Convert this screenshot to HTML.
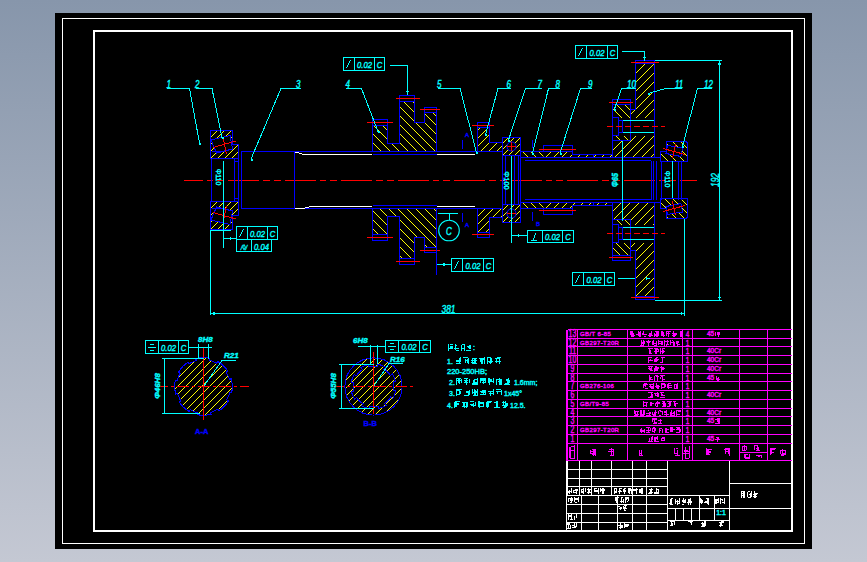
<!DOCTYPE html>
<html><head><meta charset="utf-8"><style>
html,body{margin:0;padding:0;width:867px;height:562px;overflow:hidden;}
body{background:linear-gradient(to bottom,#8796ab 0%,#c4c8d3 100%);}
svg{position:absolute;left:0;top:0;}
text{font-family:"Liberation Sans",sans-serif;}
</style></head><body>
<svg width="867" height="562" viewBox="0 0 867 562" shape-rendering="crispEdges">
<rect x="55" y="13" width="757" height="536" fill="#000"/>
<rect x="62.5" y="18.5" width="742" height="525" fill="none" stroke="#ffffff" stroke-width="1"/>
<rect x="94" y="31" width="698" height="500" fill="none" stroke="#ffffff" stroke-width="2"/>
<path d="M183.5,180.5H697" stroke="#ff0000" stroke-width="1" stroke-dasharray="31,4,6.5,4,7,4" stroke-dashoffset="11.6"/>
<clipPath id="cp1"><polygon points="210.5,130.5 232,130.5 232,144.5 238.5,144.5 238.5,158.5 210.5,158.5"/></clipPath>
<path clip-path="url(#cp1)" d="M210.5,130.5L182.5,158.5M217.5,130.5L189.5,158.5M224.5,130.5L196.5,158.5M231.5,130.5L203.5,158.5M238.5,130.5L210.5,158.5M245.5,130.5L217.5,158.5M252.5,130.5L224.5,158.5M259.5,130.5L231.5,158.5" stroke="#ffff00" stroke-width="1" fill="none"/>
<polygon points="211,140 230,135.5 232.5,149 216.5,153" stroke="#000" stroke-width="0" fill="#000"/>
<polygon points="210.5,130.5 232,130.5 232,144.5 238.5,144.5 238.5,158.5 210.5,158.5" stroke="#0000ff" stroke-width="1" fill="none"/>
<polygon points="211,140 230,135.5 232.5,149 216.5,153" stroke="#0000ff" stroke-width="1" fill="none"/>
<line x1="212" y1="151.5" x2="226" y2="151.5" stroke="#0000ff" stroke-width="1"/>
<line x1="213" y1="147.5" x2="236" y2="141" stroke="#ff0000" stroke-width="1"/>
<line x1="223.5" y1="139" x2="226.5" y2="154" stroke="#ff0000" stroke-width="1"/>
<clipPath id="cp2"><polygon points="210.5,229.5 232,229.5 232,215.5 238.5,215.5 238.5,201.5 210.5,201.5"/></clipPath>
<path clip-path="url(#cp2)" d="M210.5,201.5L182.5,229.5M217.5,201.5L189.5,229.5M224.5,201.5L196.5,229.5M231.5,201.5L203.5,229.5M238.5,201.5L210.5,229.5M245.5,201.5L217.5,229.5M252.5,201.5L224.5,229.5M259.5,201.5L231.5,229.5" stroke="#ffff00" stroke-width="1" fill="none"/>
<polygon points="211,220 230,224.5 232.5,211 216.5,207" stroke="#000" stroke-width="0" fill="#000"/>
<polygon points="210.5,229.5 232,229.5 232,215.5 238.5,215.5 238.5,201.5 210.5,201.5" stroke="#0000ff" stroke-width="1" fill="none"/>
<polygon points="211,220 230,224.5 232.5,211 216.5,207" stroke="#0000ff" stroke-width="1" fill="none"/>
<line x1="212" y1="208.5" x2="226" y2="208.5" stroke="#0000ff" stroke-width="1"/>
<line x1="213" y1="212.5" x2="236" y2="219" stroke="#ff0000" stroke-width="1"/>
<line x1="223.5" y1="221" x2="226.5" y2="206" stroke="#ff0000" stroke-width="1"/>
<line x1="211.5" y1="158.5" x2="211.5" y2="201.5" stroke="#0000ff" stroke-width="1"/>
<line x1="234.5" y1="158.5" x2="234.5" y2="201.5" stroke="#0000ff" stroke-width="1"/>
<line x1="238.5" y1="158.5" x2="238.5" y2="201.5" stroke="#0000ff" stroke-width="1"/>
<line x1="234.5" y1="161.5" x2="238.5" y2="161.5" stroke="#0000ff" stroke-width="1"/>
<line x1="234.5" y1="198.5" x2="238.5" y2="198.5" stroke="#0000ff" stroke-width="1"/>
<rect x="241.5" y="151.5" width="53.0" height="57.0" stroke="#0000ff" stroke-width="1" fill="none"/>
<line x1="294.5" y1="151.5" x2="502.5" y2="151.5" stroke="#0000ff" stroke-width="1"/>
<line x1="294.5" y1="208.5" x2="502.5" y2="208.5" stroke="#0000ff" stroke-width="1"/>
<polyline points="295,152 299,153 303,154.5 372,154.5" stroke="#ffffff" stroke-width="1" fill="none"/>
<polyline points="295,208.5 301,209 311,206.5 372,206.5" stroke="#ffffff" stroke-width="1" fill="none"/>
<line x1="437" y1="154.5" x2="475" y2="154.5" stroke="#ffffff" stroke-width="1"/>
<line x1="437" y1="206.5" x2="475" y2="206.5" stroke="#ffffff" stroke-width="1"/>
<clipPath id="cp3"><polygon points="372.5,119.5 387.5,119.5 387.5,143.5 399.5,143.5 399.5,95.5 414.5,95.5 414.5,122.5 424.5,122.5 424.5,107.5 436.5,107.5 436.5,151.5 372.5,151.5"/></clipPath>
<path clip-path="url(#cp3)" d="M316.5,95.5L372.5,151.5M325.5,95.5L381.5,151.5M334.5,95.5L390.5,151.5M343.5,95.5L399.5,151.5M352.5,95.5L408.5,151.5M361.5,95.5L417.5,151.5M370.5,95.5L426.5,151.5M379.5,95.5L435.5,151.5M388.5,95.5L444.5,151.5M397.5,95.5L453.5,151.5M406.5,95.5L462.5,151.5M415.5,95.5L471.5,151.5M424.5,95.5L480.5,151.5M433.5,95.5L489.5,151.5" stroke="#ffff00" stroke-width="1" fill="none"/>
<rect x="372.5" y="119.5" width="15.0" height="6.0" fill="#000"/>
<rect x="399.5" y="95.5" width="15.0" height="6.0" fill="#000"/>
<rect x="424.5" y="107.5" width="12.0" height="5.0" fill="#000"/>
<polygon points="372.5,119.5 387.5,119.5 387.5,143.5 399.5,143.5 399.5,95.5 414.5,95.5 414.5,122.5 424.5,122.5 424.5,107.5 436.5,107.5 436.5,151.5 372.5,151.5" stroke="#0000ff" stroke-width="1" fill="none"/>
<line x1="372.5" y1="125.5" x2="387.5" y2="125.5" stroke="#0000ff" stroke-width="1"/>
<line x1="399.5" y1="101.5" x2="414.5" y2="101.5" stroke="#0000ff" stroke-width="1"/>
<line x1="424.5" y1="112.5" x2="436.5" y2="112.5" stroke="#0000ff" stroke-width="1"/>
<line x1="367" y1="122.5" x2="392.5" y2="122.5" stroke="#ff0000" stroke-width="1"/>
<line x1="396" y1="98.5" x2="420" y2="98.5" stroke="#ff0000" stroke-width="1"/>
<line x1="420" y1="109.5" x2="440" y2="109.5" stroke="#ff0000" stroke-width="1"/>
<clipPath id="cp4"><polygon points="372.5,240.5 387.5,240.5 387.5,216.5 399.5,216.5 399.5,264.5 414.5,264.5 414.5,237.5 424.5,237.5 424.5,252.5 436.5,252.5 436.5,208.5 372.5,208.5"/></clipPath>
<path clip-path="url(#cp4)" d="M316.5,208.5L372.5,264.5M325.5,208.5L381.5,264.5M334.5,208.5L390.5,264.5M343.5,208.5L399.5,264.5M352.5,208.5L408.5,264.5M361.5,208.5L417.5,264.5M370.5,208.5L426.5,264.5M379.5,208.5L435.5,264.5M388.5,208.5L444.5,264.5M397.5,208.5L453.5,264.5M406.5,208.5L462.5,264.5M415.5,208.5L471.5,264.5M424.5,208.5L480.5,264.5M433.5,208.5L489.5,264.5" stroke="#ffff00" stroke-width="1" fill="none"/>
<rect x="372.5" y="234.5" width="15.0" height="6.0" fill="#000"/>
<rect x="399.5" y="258.5" width="15.0" height="6.0" fill="#000"/>
<rect x="424.5" y="247.5" width="12.0" height="5.0" fill="#000"/>
<polygon points="372.5,240.5 387.5,240.5 387.5,216.5 399.5,216.5 399.5,264.5 414.5,264.5 414.5,237.5 424.5,237.5 424.5,252.5 436.5,252.5 436.5,208.5 372.5,208.5" stroke="#0000ff" stroke-width="1" fill="none"/>
<line x1="372.5" y1="234.5" x2="387.5" y2="234.5" stroke="#0000ff" stroke-width="1"/>
<line x1="399.5" y1="258.5" x2="414.5" y2="258.5" stroke="#0000ff" stroke-width="1"/>
<line x1="424.5" y1="247.5" x2="436.5" y2="247.5" stroke="#0000ff" stroke-width="1"/>
<line x1="367" y1="237.5" x2="392.5" y2="237.5" stroke="#ff0000" stroke-width="1"/>
<line x1="396" y1="261.5" x2="420" y2="261.5" stroke="#ff0000" stroke-width="1"/>
<line x1="420" y1="250.5" x2="440" y2="250.5" stroke="#ff0000" stroke-width="1"/>
<line x1="372.5" y1="154.5" x2="436.5" y2="154.5" stroke="#0000ff" stroke-width="1"/>
<line x1="372.5" y1="205.5" x2="436.5" y2="205.5" stroke="#0000ff" stroke-width="1"/>
<line x1="436.5" y1="208" x2="436.5" y2="275" stroke="#0000ff" stroke-width="1"/>
<circle cx="449" cy="230.5" r="10.3" fill="none" stroke="#00ffff" stroke-width="1.1" shape-rendering="geometricPrecision"/>
<line x1="449" y1="213" x2="449" y2="220" stroke="#00ffff" stroke-width="1"/>
<line x1="438" y1="213.5" x2="458" y2="213.5" stroke="#00ffff" stroke-width="1"/>
<text transform="translate(449 234.5) rotate(0) scale(0.8 1)" fill="#00ffff" font-size="10" text-anchor="middle" style="font-style:italic;font-weight:normal" stroke="#00ffff" stroke-width="0.4">C</text>
<line x1="462.5" y1="213" x2="462.5" y2="222" stroke="#0000ff" stroke-width="1"/>
<line x1="462.5" y1="140" x2="462.5" y2="149" stroke="#0000ff" stroke-width="1"/>
<text x="465" y="227" fill="#0000ff" font-size="6" stroke="#0000ff" stroke-width="0.4">A</text>
<text x="465" y="137" fill="#0000ff" font-size="6" stroke="#0000ff" stroke-width="0.4">A</text>
<line x1="532.5" y1="213" x2="532.5" y2="221" stroke="#0000ff" stroke-width="1"/>
<text x="536" y="226" fill="#0000ff" font-size="6" stroke="#0000ff" stroke-width="0.4">B</text>
<clipPath id="cp5"><polygon points="477.5,122.5 489,122.5 489,142.5 502,142.5 502,151.5 477.5,151.5"/></clipPath>
<path clip-path="url(#cp5)" d="M477.5,122.5L448.5,151.5M485.5,122.5L456.5,151.5M493.5,122.5L464.5,151.5M501.5,122.5L472.5,151.5M509.5,122.5L480.5,151.5M517.5,122.5L488.5,151.5M525.5,122.5L496.5,151.5" stroke="#ffff00" stroke-width="1" fill="none"/>
<rect x="477.5" y="122.5" width="11.5" height="5.0" fill="#000"/>
<polygon points="477.5,122.5 489,122.5 489,142.5 502,142.5 502,151.5 477.5,151.5" stroke="#0000ff" stroke-width="1" fill="none"/>
<line x1="477.5" y1="127.5" x2="489" y2="127.5" stroke="#0000ff" stroke-width="1"/>
<line x1="472" y1="125.5" x2="494" y2="125.5" stroke="#ff0000" stroke-width="1"/>
<clipPath id="cp6"><polygon points="477.5,237.5 489,237.5 489,217.5 502,217.5 502,208.5 477.5,208.5"/></clipPath>
<path clip-path="url(#cp6)" d="M477.5,208.5L448.5,237.5M485.5,208.5L456.5,237.5M493.5,208.5L464.5,237.5M501.5,208.5L472.5,237.5M509.5,208.5L480.5,237.5M517.5,208.5L488.5,237.5M525.5,208.5L496.5,237.5" stroke="#ffff00" stroke-width="1" fill="none"/>
<rect x="477.5" y="232.5" width="11.5" height="5.0" fill="#000"/>
<polygon points="477.5,237.5 489,237.5 489,217.5 502,217.5 502,208.5 477.5,208.5" stroke="#0000ff" stroke-width="1" fill="none"/>
<line x1="477.5" y1="232.5" x2="489" y2="232.5" stroke="#0000ff" stroke-width="1"/>
<line x1="472" y1="234.5" x2="494" y2="234.5" stroke="#ff0000" stroke-width="1"/>
<clipPath id="cp7"><polygon points="502.5,137.5 520.5,137.5 520.5,155.5 502.5,155.5"/></clipPath>
<path clip-path="url(#cp7)" d="M502.5,137.5L484.5,155.5M508.5,137.5L490.5,155.5M514.5,137.5L496.5,155.5M520.5,137.5L502.5,155.5M526.5,137.5L508.5,155.5M532.5,137.5L514.5,155.5" stroke="#ffff00" stroke-width="1" fill="none"/>
<circle cx="511.5" cy="146.5" r="4.5" fill="#000" stroke="#0000ff" stroke-width="1.1" shape-rendering="geometricPrecision"/>
<polygon points="502.5,137.5 520.5,137.5 520.5,155.5 502.5,155.5" stroke="#0000ff" stroke-width="1" fill="none"/>
<line x1="507" y1="146.5" x2="516" y2="146.5" stroke="#ff0000" stroke-width="1"/>
<line x1="511.5" y1="142" x2="511.5" y2="151" stroke="#ff0000" stroke-width="1"/>
<clipPath id="cp8"><polygon points="502.5,222.5 520.5,222.5 520.5,204.5 502.5,204.5"/></clipPath>
<path clip-path="url(#cp8)" d="M502.5,204.5L484.5,222.5M508.5,204.5L490.5,222.5M514.5,204.5L496.5,222.5M520.5,204.5L502.5,222.5M526.5,204.5L508.5,222.5M532.5,204.5L514.5,222.5" stroke="#ffff00" stroke-width="1" fill="none"/>
<circle cx="511.5" cy="213.5" r="4.5" fill="#000" stroke="#0000ff" stroke-width="1.1" shape-rendering="geometricPrecision"/>
<polygon points="502.5,222.5 520.5,222.5 520.5,204.5 502.5,204.5" stroke="#0000ff" stroke-width="1" fill="none"/>
<line x1="507" y1="213.5" x2="516" y2="213.5" stroke="#ff0000" stroke-width="1"/>
<line x1="511.5" y1="218" x2="511.5" y2="209" stroke="#ff0000" stroke-width="1"/>
<line x1="502.5" y1="155.5" x2="502.5" y2="204.5" stroke="#0000ff" stroke-width="1"/>
<line x1="505.5" y1="155.5" x2="505.5" y2="204.5" stroke="#0000ff" stroke-width="1"/>
<line x1="514.5" y1="155.5" x2="514.5" y2="204.5" stroke="#0000ff" stroke-width="1"/>
<line x1="518.5" y1="155.5" x2="518.5" y2="204.5" stroke="#0000ff" stroke-width="1"/>
<line x1="520.5" y1="155.5" x2="520.5" y2="204.5" stroke="#0000ff" stroke-width="1"/>
<clipPath id="cp9"><polygon points="520.5,151.5 543.5,151.5 543.5,157.5 520.5,157.5"/></clipPath>
<path clip-path="url(#cp9)" d="M514.5,151.5L520.5,157.5M522.5,151.5L528.5,157.5M530.5,151.5L536.5,157.5M538.5,151.5L544.5,157.5" stroke="#ffff00" stroke-width="1" fill="none"/>
<clipPath id="cp10"><polygon points="543.5,151.5 572.5,151.5 572.5,154.5 612,154.5 612,157.5 543.5,157.5"/></clipPath>
<path clip-path="url(#cp10)" d="M543.5,151.5L537.5,157.5M551.5,151.5L545.5,157.5M559.5,151.5L553.5,157.5M567.5,151.5L561.5,157.5M575.5,151.5L569.5,157.5M583.5,151.5L577.5,157.5M591.5,151.5L585.5,157.5M599.5,151.5L593.5,157.5M607.5,151.5L601.5,157.5M615.5,151.5L609.5,157.5" stroke="#ffff00" stroke-width="1" fill="none"/>
<polygon points="520.5,151.5 572.5,151.5 572.5,154.5 612,154.5 612,157.5 520.5,157.5" stroke="#0000ff" stroke-width="1" fill="none"/>
<rect x="543.5" y="145.5" width="29.0" height="6.0" stroke="#0000ff" stroke-width="1" fill="none"/>
<line x1="539" y1="149.5" x2="576" y2="149.5" stroke="#ff0000" stroke-width="1"/>
<line x1="524.5" y1="160.5" x2="651" y2="160.5" stroke="#0000ff" stroke-width="1"/>
<line x1="532.5" y1="140" x2="532.5" y2="148" stroke="#0000ff" stroke-width="1"/>
<line x1="593.5" y1="154.5" x2="593.5" y2="157.5" stroke="#0000ff" stroke-width="1"/>
<clipPath id="cp11"><polygon points="520.5,208.5 543.5,208.5 543.5,202.5 520.5,202.5"/></clipPath>
<path clip-path="url(#cp11)" d="M514.5,202.5L520.5,208.5M522.5,202.5L528.5,208.5M530.5,202.5L536.5,208.5M538.5,202.5L544.5,208.5" stroke="#ffff00" stroke-width="1" fill="none"/>
<clipPath id="cp12"><polygon points="543.5,208.5 572.5,208.5 572.5,205.5 612,205.5 612,202.5 543.5,202.5"/></clipPath>
<path clip-path="url(#cp12)" d="M543.5,202.5L537.5,208.5M551.5,202.5L545.5,208.5M559.5,202.5L553.5,208.5M567.5,202.5L561.5,208.5M575.5,202.5L569.5,208.5M583.5,202.5L577.5,208.5M591.5,202.5L585.5,208.5M599.5,202.5L593.5,208.5M607.5,202.5L601.5,208.5M615.5,202.5L609.5,208.5" stroke="#ffff00" stroke-width="1" fill="none"/>
<polygon points="520.5,208.5 572.5,208.5 572.5,205.5 612,205.5 612,202.5 520.5,202.5" stroke="#0000ff" stroke-width="1" fill="none"/>
<rect x="543.5" y="208.5" width="29.0" height="6.0" stroke="#0000ff" stroke-width="1" fill="none"/>
<line x1="539" y1="210.5" x2="576" y2="210.5" stroke="#ff0000" stroke-width="1"/>
<line x1="524.5" y1="199.5" x2="651" y2="199.5" stroke="#0000ff" stroke-width="1"/>
<line x1="532.5" y1="220" x2="532.5" y2="212" stroke="#0000ff" stroke-width="1"/>
<line x1="593.5" y1="205.5" x2="593.5" y2="202.5" stroke="#0000ff" stroke-width="1"/>
<line x1="518.5" y1="157.5" x2="518.5" y2="202.5" stroke="#0000ff" stroke-width="1"/>
<clipPath id="cp13"><polygon points="635.5,60.5 654.5,60.5 654.5,157.5 612.5,157.5 612.5,140.5 630.5,140.5 630.5,109.5 635.5,109.5"/></clipPath>
<path clip-path="url(#cp13)" d="M612.5,60.5L515.5,157.5M621.5,60.5L524.5,157.5M630.5,60.5L533.5,157.5M639.5,60.5L542.5,157.5M648.5,60.5L551.5,157.5M657.5,60.5L560.5,157.5M666.5,60.5L569.5,157.5M675.5,60.5L578.5,157.5M684.5,60.5L587.5,157.5M693.5,60.5L596.5,157.5M702.5,60.5L605.5,157.5M711.5,60.5L614.5,157.5M720.5,60.5L623.5,157.5M729.5,60.5L632.5,157.5M738.5,60.5L641.5,157.5M747.5,60.5L650.5,157.5" stroke="#ffff00" stroke-width="1" fill="none"/>
<clipPath id="cp14"><polygon points="612.5,104.5 630.5,104.5 630.5,140.5 612.5,140.5"/></clipPath>
<path clip-path="url(#cp14)" d="M576.5,104.5L612.5,140.5M584.5,104.5L620.5,140.5M592.5,104.5L628.5,140.5M600.5,104.5L636.5,140.5M608.5,104.5L644.5,140.5M616.5,104.5L652.5,140.5M624.5,104.5L660.5,140.5" stroke="#ffff00" stroke-width="1" fill="none"/>
<rect x="635.5" y="60.5" width="19" height="3" fill="#000"/>
<polygon points="613,117.5 653.5,117.5 653.5,135.5 613,135.5" stroke="#000" stroke-width="0" fill="#000"/>
<polygon points="635.5,60.5 654.5,60.5 654.5,157.5 612.5,157.5 612.5,140.5 630.5,140.5 630.5,109.5 635.5,109.5" stroke="#0000ff" stroke-width="1" fill="none"/>
<rect x="612.5" y="99.5" width="18.0" height="41.0" stroke="#0000ff" stroke-width="1" fill="none"/>
<line x1="612.5" y1="104.5" x2="630.5" y2="104.5" stroke="#0000ff" stroke-width="1"/>
<line x1="635.5" y1="63.5" x2="654.5" y2="63.5" stroke="#0000ff" stroke-width="1"/>
<rect x="612.5" y="117.5" width="6.0" height="18.0" stroke="#0000ff" stroke-width="1" fill="none"/>
<rect x="618.5" y="120.5" width="4.0" height="12.0" stroke="#0000ff" stroke-width="1" fill="none"/>
<line x1="622.5" y1="120.5" x2="653.5" y2="120.5" stroke="#00ffff" stroke-width="1"/>
<line x1="622.5" y1="132.5" x2="653.5" y2="132.5" stroke="#00ffff" stroke-width="1"/>
<path d="M607,126.5H665" stroke="#ff0000" stroke-dasharray="6,3"/>
<line x1="609" y1="102.5" x2="633" y2="102.5" stroke="#ff0000" stroke-width="1"/>
<line x1="631" y1="62.5" x2="659" y2="62.5" stroke="#ff0000" stroke-width="1"/>
<clipPath id="cp15"><polygon points="635.5,299.5 654.5,299.5 654.5,202.5 612.5,202.5 612.5,219.5 630.5,219.5 630.5,250.5 635.5,250.5"/></clipPath>
<path clip-path="url(#cp15)" d="M612.5,202.5L515.5,299.5M621.5,202.5L524.5,299.5M630.5,202.5L533.5,299.5M639.5,202.5L542.5,299.5M648.5,202.5L551.5,299.5M657.5,202.5L560.5,299.5M666.5,202.5L569.5,299.5M675.5,202.5L578.5,299.5M684.5,202.5L587.5,299.5M693.5,202.5L596.5,299.5M702.5,202.5L605.5,299.5M711.5,202.5L614.5,299.5M720.5,202.5L623.5,299.5M729.5,202.5L632.5,299.5M738.5,202.5L641.5,299.5M747.5,202.5L650.5,299.5" stroke="#ffff00" stroke-width="1" fill="none"/>
<clipPath id="cp16"><polygon points="612.5,255.5 630.5,255.5 630.5,219.5 612.5,219.5"/></clipPath>
<path clip-path="url(#cp16)" d="M576.5,219.5L612.5,255.5M584.5,219.5L620.5,255.5M592.5,219.5L628.5,255.5M600.5,219.5L636.5,255.5M608.5,219.5L644.5,255.5M616.5,219.5L652.5,255.5M624.5,219.5L660.5,255.5" stroke="#ffff00" stroke-width="1" fill="none"/>
<rect x="635.5" y="296.5" width="19" height="3" fill="#000"/>
<polygon points="613,242.5 653.5,242.5 653.5,224.5 613,224.5" stroke="#000" stroke-width="0" fill="#000"/>
<polygon points="635.5,299.5 654.5,299.5 654.5,202.5 612.5,202.5 612.5,219.5 630.5,219.5 630.5,250.5 635.5,250.5" stroke="#0000ff" stroke-width="1" fill="none"/>
<rect x="612.5" y="219.5" width="18.0" height="41.0" stroke="#0000ff" stroke-width="1" fill="none"/>
<line x1="612.5" y1="255.5" x2="630.5" y2="255.5" stroke="#0000ff" stroke-width="1"/>
<line x1="635.5" y1="296.5" x2="654.5" y2="296.5" stroke="#0000ff" stroke-width="1"/>
<rect x="612.5" y="224.5" width="6.0" height="18.0" stroke="#0000ff" stroke-width="1" fill="none"/>
<rect x="618.5" y="227.5" width="4.0" height="12.0" stroke="#0000ff" stroke-width="1" fill="none"/>
<line x1="622.5" y1="239.5" x2="653.5" y2="239.5" stroke="#00ffff" stroke-width="1"/>
<line x1="622.5" y1="227.5" x2="653.5" y2="227.5" stroke="#00ffff" stroke-width="1"/>
<path d="M607,233.5H665" stroke="#ff0000" stroke-dasharray="6,3"/>
<line x1="609" y1="257.5" x2="633" y2="257.5" stroke="#ff0000" stroke-width="1"/>
<line x1="631" y1="297.5" x2="659" y2="297.5" stroke="#ff0000" stroke-width="1"/>
<clipPath id="cp17"><polygon points="666.5,141.5 686,141.5 687.5,143 687.5,161.5 660.5,161.5 660.5,151.5 666.5,151.5"/></clipPath>
<path clip-path="url(#cp17)" d="M640.5,141.5L660.5,161.5M648.5,141.5L668.5,161.5M656.5,141.5L676.5,161.5M664.5,141.5L684.5,161.5M672.5,141.5L692.5,161.5M680.5,141.5L700.5,161.5" stroke="#ffff00" stroke-width="1" fill="none"/>
<polygon points="667.5,145.5 682.5,148 681,156.5 666,153.5" stroke="#000" stroke-width="0" fill="#000"/>
<polygon points="666.5,141.5 686,141.5 687.5,143 687.5,161.5 660.5,161.5 660.5,151.5 666.5,151.5" stroke="#0000ff" stroke-width="1" fill="none"/>
<polygon points="667.5,145.5 682.5,148 681,156.5 666,153.5" stroke="#0000ff" stroke-width="1" fill="none"/>
<line x1="663" y1="148.5" x2="685" y2="154.5" stroke="#ff0000" stroke-width="1"/>
<line x1="675.5" y1="144.5" x2="672.5" y2="158.5" stroke="#ff0000" stroke-width="1"/>
<clipPath id="cp18"><polygon points="666.5,218.5 686,218.5 687.5,217 687.5,198.5 660.5,198.5 660.5,208.5 666.5,208.5"/></clipPath>
<path clip-path="url(#cp18)" d="M640.5,198.5L660.5,218.5M648.5,198.5L668.5,218.5M656.5,198.5L676.5,218.5M664.5,198.5L684.5,218.5M672.5,198.5L692.5,218.5M680.5,198.5L700.5,218.5" stroke="#ffff00" stroke-width="1" fill="none"/>
<polygon points="667.5,214.5 682.5,212 681,203.5 666,206.5" stroke="#000" stroke-width="0" fill="#000"/>
<polygon points="666.5,218.5 686,218.5 687.5,217 687.5,198.5 660.5,198.5 660.5,208.5 666.5,208.5" stroke="#0000ff" stroke-width="1" fill="none"/>
<polygon points="667.5,214.5 682.5,212 681,203.5 666,206.5" stroke="#0000ff" stroke-width="1" fill="none"/>
<line x1="663" y1="211.5" x2="685" y2="205.5" stroke="#ff0000" stroke-width="1"/>
<line x1="675.5" y1="215.5" x2="672.5" y2="201.5" stroke="#ff0000" stroke-width="1"/>
<line x1="651.5" y1="160.5" x2="651.5" y2="199.5" stroke="#0000ff" stroke-width="1"/>
<line x1="653.5" y1="160.5" x2="653.5" y2="199.5" stroke="#0000ff" stroke-width="1"/>
<line x1="656.5" y1="160.5" x2="656.5" y2="199.5" stroke="#0000ff" stroke-width="1"/>
<line x1="661" y1="160.5" x2="661" y2="199.5" stroke="#0000ff" stroke-width="1"/>
<line x1="678.5" y1="160.5" x2="678.5" y2="199.5" stroke="#0000ff" stroke-width="1"/>
<line x1="681.5" y1="160.5" x2="681.5" y2="199.5" stroke="#0000ff" stroke-width="1"/>
<line x1="654" y1="157.5" x2="661" y2="157.5" stroke="#0000ff" stroke-width="1"/>
<line x1="654" y1="202.5" x2="661" y2="202.5" stroke="#0000ff" stroke-width="1"/>
<polyline points="167,88.5 189.5,88.5 199.5,143" stroke="#00ffff" stroke-width="1" fill="none"/>
<text transform="translate(166.5 88) rotate(0) scale(0.8 1)" fill="#00ffff" font-size="10" text-anchor="start" style="font-style:italic;font-weight:normal" stroke="#00ffff" stroke-width="0.4">1</text>
<polyline points="195.5,88.5 212,88.5 222,137.5" stroke="#00ffff" stroke-width="1" fill="none"/>
<text transform="translate(195 88) rotate(0) scale(0.8 1)" fill="#00ffff" font-size="10" text-anchor="start" style="font-style:italic;font-weight:normal" stroke="#00ffff" stroke-width="0.4">2</text>
<polyline points="300.5,88.5 281,88.5 251,159" stroke="#00ffff" stroke-width="1" fill="none"/>
<text transform="translate(296 88) rotate(0) scale(0.8 1)" fill="#00ffff" font-size="10" text-anchor="start" style="font-style:italic;font-weight:normal" stroke="#00ffff" stroke-width="0.4">3</text>
<polyline points="345.5,88.5 361.5,88.5 378,131.5" stroke="#00ffff" stroke-width="1" fill="none"/>
<text transform="translate(345.5 88) rotate(0) scale(0.8 1)" fill="#00ffff" font-size="10" text-anchor="start" style="font-style:italic;font-weight:normal" stroke="#00ffff" stroke-width="0.4">4</text>
<polyline points="437.5,88.5 460,88.5 476.5,152.5" stroke="#00ffff" stroke-width="1" fill="none"/>
<text transform="translate(437 88) rotate(0) scale(0.8 1)" fill="#00ffff" font-size="10" text-anchor="start" style="font-style:italic;font-weight:normal" stroke="#00ffff" stroke-width="0.4">5</text>
<polyline points="511,88.5 498,88.5 485.5,134.5" stroke="#00ffff" stroke-width="1" fill="none"/>
<text transform="translate(506.5 88) rotate(0) scale(0.8 1)" fill="#00ffff" font-size="10" text-anchor="start" style="font-style:italic;font-weight:normal" stroke="#00ffff" stroke-width="0.4">6</text>
<polyline points="542,88.5 525.5,88.5 508.5,140" stroke="#00ffff" stroke-width="1" fill="none"/>
<text transform="translate(537.5 88) rotate(0) scale(0.8 1)" fill="#00ffff" font-size="10" text-anchor="start" style="font-style:italic;font-weight:normal" stroke="#00ffff" stroke-width="0.4">7</text>
<polyline points="560,88.5 548.5,88.5 532.5,153.5" stroke="#00ffff" stroke-width="1" fill="none"/>
<text transform="translate(555.5 88) rotate(0) scale(0.8 1)" fill="#00ffff" font-size="10" text-anchor="start" style="font-style:italic;font-weight:normal" stroke="#00ffff" stroke-width="0.4">8</text>
<polyline points="592,88.5 580.5,88.5 560,153.5" stroke="#00ffff" stroke-width="1" fill="none"/>
<text transform="translate(588 88) rotate(0) scale(0.8 1)" fill="#00ffff" font-size="10" text-anchor="start" style="font-style:italic;font-weight:normal" stroke="#00ffff" stroke-width="0.4">9</text>
<polyline points="635.5,88.5 621.5,88.5 614.5,109" stroke="#00ffff" stroke-width="1" fill="none"/>
<text transform="translate(627 88) rotate(0) scale(0.8 1)" fill="#00ffff" font-size="10" text-anchor="start" style="font-style:italic;font-weight:normal" stroke="#00ffff" stroke-width="0.4">10</text>
<polyline points="681.5,88.5 665.5,88.5 648,93.5" stroke="#00ffff" stroke-width="1" fill="none"/>
<text transform="translate(675 88) rotate(0) scale(0.8 1)" fill="#00ffff" font-size="10" text-anchor="start" style="font-style:italic;font-weight:normal" stroke="#00ffff" stroke-width="0.4">11</text>
<polyline points="712,88.5 697.5,88.5 682.5,146.5" stroke="#00ffff" stroke-width="1" fill="none"/>
<text transform="translate(704 88) rotate(0) scale(0.8 1)" fill="#00ffff" font-size="10" text-anchor="start" style="font-style:italic;font-weight:normal" stroke="#00ffff" stroke-width="0.4">12</text>
<rect x="198.5" y="142.5" width="2" height="2" fill="#00ffff"/>
<rect x="221.5" y="136.5" width="2" height="2" fill="#00ffff"/>
<rect x="250.5" y="158.5" width="2" height="2" fill="#00ffff"/>
<rect x="377.5" y="130.5" width="2" height="2" fill="#00ffff"/>
<rect x="475.5" y="151.5" width="2" height="2" fill="#00ffff"/>
<rect x="484.5" y="133.5" width="2" height="2" fill="#00ffff"/>
<rect x="507.5" y="139.5" width="2" height="2" fill="#00ffff"/>
<rect x="531.5" y="152.5" width="2" height="2" fill="#00ffff"/>
<rect x="559.5" y="152.5" width="2" height="2" fill="#00ffff"/>
<rect x="613.5" y="108.5" width="2" height="2" fill="#00ffff"/>
<rect x="647.5" y="92.5" width="2" height="2" fill="#00ffff"/>
<rect x="681.5" y="145.5" width="2" height="2" fill="#00ffff"/>
<polygon points="406.0,91 409.0,91 407.5,95" fill="#00ffff"/>
<polygon points="643.0,57 646.0,57 644.5,61" fill="#00ffff"/>
<polygon points="231,237.0 231,240.0 227,238.5" fill="#00ffff"/>
<polygon points="444.5,263.0 444.5,266.0 440.5,264.5" fill="#00ffff"/>
<polygon points="519,234.0 519,237.0 515,235.5" fill="#00ffff"/>
<polygon points="646,277.0 646,280.0 650,278.5" fill="#00ffff"/>
<polygon points="214.5,312.0 214.5,315.0 210.5,313.5" fill="#00ffff"/>
<polygon points="680.5,312.0 680.5,315.0 684.5,313.5" fill="#00ffff"/>
<polygon points="718.0,64.5 721.0,64.5 719.5,60.5" fill="#00ffff"/>
<polygon points="718.0,296.5 721.0,296.5 719.5,300.5" fill="#00ffff"/>
<rect x="343.5" y="57.5" width="11.0" height="13.0" stroke="#00ffff" stroke-width="1" fill="none"/>
<rect x="354.5" y="57.5" width="20.0" height="13.0" stroke="#00ffff" stroke-width="1" fill="none"/>
<rect x="374.5" y="57.5" width="10.0" height="13.0" stroke="#00ffff" stroke-width="1" fill="none"/>
<line x1="346.5" y1="68" x2="350.5" y2="60" stroke="#00ffff" stroke-width="1"/>
<text transform="translate(364.5 67.5) rotate(0) scale(0.85 1)" fill="#00ffff" font-size="9" text-anchor="middle" style="font-style:italic;font-weight:normal" stroke="#00ffff" stroke-width="0.4">0.02</text>
<text transform="translate(379.5 67.5) rotate(0) scale(0.85 1)" fill="#00ffff" font-size="9" text-anchor="middle" style="font-style:italic;font-weight:normal" stroke="#00ffff" stroke-width="0.4">C</text>
<polyline points="390,65.5 407.5,65.5 407.5,95" stroke="#00ffff" stroke-width="1" fill="none"/>
<rect x="575.5" y="45.5" width="11.0" height="13.0" stroke="#00ffff" stroke-width="1" fill="none"/>
<rect x="586.5" y="45.5" width="21.0" height="13.0" stroke="#00ffff" stroke-width="1" fill="none"/>
<rect x="607.5" y="45.5" width="10.0" height="13.0" stroke="#00ffff" stroke-width="1" fill="none"/>
<line x1="578.5" y1="56" x2="582.5" y2="48" stroke="#00ffff" stroke-width="1"/>
<text transform="translate(597.0 55.5) rotate(0) scale(0.85 1)" fill="#00ffff" font-size="9" text-anchor="middle" style="font-style:italic;font-weight:normal" stroke="#00ffff" stroke-width="0.4">0.02</text>
<text transform="translate(612.5 55.5) rotate(0) scale(0.85 1)" fill="#00ffff" font-size="9" text-anchor="middle" style="font-style:italic;font-weight:normal" stroke="#00ffff" stroke-width="0.4">C</text>
<polyline points="622,51.5 644.5,51.5 644.5,61" stroke="#00ffff" stroke-width="1" fill="none"/>
<rect x="236.5" y="226.5" width="11.0" height="13.0" stroke="#00ffff" stroke-width="1" fill="none"/>
<rect x="247.5" y="226.5" width="20.0" height="13.0" stroke="#00ffff" stroke-width="1" fill="none"/>
<rect x="267.5" y="226.5" width="10.0" height="13.0" stroke="#00ffff" stroke-width="1" fill="none"/>
<line x1="239.5" y1="237" x2="243.5" y2="229" stroke="#00ffff" stroke-width="1"/>
<text transform="translate(257.5 236.5) rotate(0) scale(0.85 1)" fill="#00ffff" font-size="9" text-anchor="middle" style="font-style:italic;font-weight:normal" stroke="#00ffff" stroke-width="0.4">0.02</text>
<text transform="translate(272.5 236.5) rotate(0) scale(0.85 1)" fill="#00ffff" font-size="9" text-anchor="middle" style="font-style:italic;font-weight:normal" stroke="#00ffff" stroke-width="0.4">C</text>
<rect x="236.5" y="239.5" width="15.0" height="12.0" stroke="#00ffff" stroke-width="1" fill="none"/>
<rect x="251.5" y="239.5" width="20.0" height="12.0" stroke="#00ffff" stroke-width="1" fill="none"/>
<text transform="translate(244 249.5) rotate(0) scale(0.8 1)" fill="#00ffff" font-size="8" text-anchor="middle" style="font-style:italic;font-weight:normal" stroke="#00ffff" stroke-width="0.4">/◊/</text>
<text transform="translate(261.5 249.5) rotate(0) scale(0.85 1)" fill="#00ffff" font-size="9" text-anchor="middle" style="font-style:italic;font-weight:normal" stroke="#00ffff" stroke-width="0.4">0.04</text>
<line x1="223.5" y1="238.5" x2="236.5" y2="238.5" stroke="#00ffff" stroke-width="1"/>
<line x1="223.5" y1="161" x2="223.5" y2="248" stroke="#00ffff" stroke-width="1"/>
<rect x="451.5" y="258.5" width="11.0" height="13.0" stroke="#00ffff" stroke-width="1" fill="none"/>
<rect x="462.5" y="258.5" width="21.0" height="13.0" stroke="#00ffff" stroke-width="1" fill="none"/>
<rect x="483.5" y="258.5" width="10.0" height="13.0" stroke="#00ffff" stroke-width="1" fill="none"/>
<line x1="454.5" y1="269" x2="458.5" y2="261" stroke="#00ffff" stroke-width="1"/>
<text transform="translate(473.0 268.5) rotate(0) scale(0.85 1)" fill="#00ffff" font-size="9" text-anchor="middle" style="font-style:italic;font-weight:normal" stroke="#00ffff" stroke-width="0.4">0.02</text>
<text transform="translate(488.5 268.5) rotate(0) scale(0.85 1)" fill="#00ffff" font-size="9" text-anchor="middle" style="font-style:italic;font-weight:normal" stroke="#00ffff" stroke-width="0.4">C</text>
<line x1="436.5" y1="264.5" x2="451" y2="264.5" stroke="#00ffff" stroke-width="1"/>
<rect x="527.5" y="230.5" width="15.0" height="12.0" stroke="#00ffff" stroke-width="1" fill="none"/>
<rect x="542.5" y="230.5" width="20.0" height="12.0" stroke="#00ffff" stroke-width="1" fill="none"/>
<rect x="562.5" y="230.5" width="11.0" height="12.0" stroke="#00ffff" stroke-width="1" fill="none"/>
<line x1="535.5" y1="233" x2="533.5" y2="240" stroke="#00ffff" stroke-width="1"/>
<line x1="530.5" y1="240.5" x2="536.5" y2="240.5" stroke="#00ffff" stroke-width="1"/>
<text transform="translate(552.5 239.5) rotate(0) scale(0.85 1)" fill="#00ffff" font-size="9" text-anchor="middle" style="font-style:italic;font-weight:normal" stroke="#00ffff" stroke-width="0.4">0.02</text>
<text transform="translate(568.0 239.5) rotate(0) scale(0.85 1)" fill="#00ffff" font-size="9" text-anchor="middle" style="font-style:italic;font-weight:normal" stroke="#00ffff" stroke-width="0.4">C</text>
<line x1="511.5" y1="235.5" x2="527" y2="235.5" stroke="#00ffff" stroke-width="1"/>
<line x1="511.5" y1="155.5" x2="511.5" y2="243" stroke="#00ffff" stroke-width="1"/>
<rect x="572.5" y="272.5" width="11.0" height="13.0" stroke="#00ffff" stroke-width="1" fill="none"/>
<rect x="583.5" y="272.5" width="21.0" height="13.0" stroke="#00ffff" stroke-width="1" fill="none"/>
<rect x="604.5" y="272.5" width="10.0" height="13.0" stroke="#00ffff" stroke-width="1" fill="none"/>
<line x1="575.5" y1="283" x2="579.5" y2="275" stroke="#00ffff" stroke-width="1"/>
<text transform="translate(594.0 282.5) rotate(0) scale(0.85 1)" fill="#00ffff" font-size="9" text-anchor="middle" style="font-style:italic;font-weight:normal" stroke="#00ffff" stroke-width="0.4">0.02</text>
<text transform="translate(609.5 282.5) rotate(0) scale(0.85 1)" fill="#00ffff" font-size="9" text-anchor="middle" style="font-style:italic;font-weight:normal" stroke="#00ffff" stroke-width="0.4">C</text>
<line x1="617.5" y1="278.5" x2="635" y2="278.5" stroke="#00ffff" stroke-width="1"/>
<line x1="622.5" y1="141" x2="622.5" y2="221" stroke="#00ffff" stroke-width="1"/>
<line x1="672.5" y1="161" x2="672.5" y2="198" stroke="#00ffff" stroke-width="1"/>
<line x1="210.5" y1="230" x2="210.5" y2="315" stroke="#00ffff" stroke-width="1"/>
<line x1="210.5" y1="230.5" x2="231" y2="230.5" stroke="#00ffff" stroke-width="1"/>
<line x1="210.5" y1="313.5" x2="684.5" y2="313.5" stroke="#00ffff" stroke-width="1"/>
<line x1="684.5" y1="219" x2="684.5" y2="316" stroke="#00ffff" stroke-width="1"/>
<text transform="translate(448.5 312.5) rotate(0) scale(0.8 1)" fill="#00ffff" font-size="10.5" text-anchor="middle" style="font-style:italic;font-weight:normal" stroke="#00ffff" stroke-width="0.4">381</text>
<line x1="654.5" y1="60.5" x2="721.5" y2="60.5" stroke="#00ffff" stroke-width="1"/>
<line x1="654.5" y1="300.5" x2="721.5" y2="300.5" stroke="#00ffff" stroke-width="1"/>
<line x1="719.5" y1="60.5" x2="719.5" y2="300.5" stroke="#00ffff" stroke-width="1"/>
<text transform="translate(718.5 180) rotate(-90) scale(0.85 1)" fill="#00ffff" font-size="10" text-anchor="middle" style="font-style:italic;font-weight:normal" stroke="#00ffff" stroke-width="0.4">192</text>
<text x="215.5" y="177" fill="#00ffff" font-size="7" text-anchor="middle" style="" transform="rotate(90 215.5 177)"  stroke="#00ffff" stroke-width="0.4">Φ110</text>
<text x="503.5" y="180.5" fill="#00ffff" font-size="7.5" text-anchor="middle" style="" transform="rotate(90 503.5 180.5)"  stroke="#00ffff" stroke-width="0.4">Φ100</text>
<text transform="translate(618 180) rotate(-90) scale(0.8 1)" fill="#00ffff" font-size="9" text-anchor="middle" style="font-style:italic;font-weight:bold" stroke="#00ffff" stroke-width="0.4">Φ65</text>
<text x="664.5" y="179" fill="#00ffff" font-size="7" text-anchor="middle" style="" transform="rotate(90 664.5 179)"  stroke="#00ffff" stroke-width="0.4">Φ110</text>
<clipPath id="cp19"><polygon points="195.82,358.74 198.09,358.21 200.4,357.87 202.74,357.71 205.07,357.74 207.4,357.97 209.7,358.38 209.27,360.33 210.56,360.65 211.84,361.03 213.1,361.48 214.33,361.98 215.53,362.55 216.71,363.18 217.69,361.44 219.68,362.67 221.56,364.06 223.32,365.6 224.95,367.28 226.43,369.08 227.77,371.0 226.09,372.07 226.77,373.21 227.41,374.39 227.98,375.59 228.49,376.82 228.94,378.08 229.33,379.35 231.26,378.82 231.79,381.09 232.13,383.4 232.29,385.74 232.26,388.07 232.03,390.4 231.62,392.7 229.67,392.27 229.35,393.56 228.97,394.84 228.52,396.1 228.02,397.33 227.45,398.53 226.82,399.71 228.56,400.69 227.33,402.68 225.94,404.56 224.4,406.32 222.72,407.95 220.92,409.43 219.0,410.77 217.93,409.09 216.79,409.77 215.61,410.41 214.41,410.98 213.18,411.49 211.92,411.94 210.65,412.33 211.18,414.26 208.91,414.79 206.6,415.13 204.26,415.29 201.93,415.26 199.6,415.03 197.3,414.62 197.73,412.67 196.44,412.35 195.16,411.97 193.9,411.52 192.67,411.02 191.47,410.45 190.29,409.82 189.31,411.56 187.32,410.33 185.44,408.94 183.68,407.4 182.05,405.72 180.57,403.92 179.23,402.0 180.91,400.93 180.23,399.79 179.59,398.61 179.02,397.41 178.51,396.18 178.06,394.92 177.67,393.65 175.74,394.18 175.21,391.91 174.87,389.6 174.71,387.26 174.74,384.93 174.97,382.6 175.38,380.3 177.33,380.73 177.65,379.44 178.03,378.16 178.48,376.9 178.98,375.67 179.55,374.47 180.18,373.29 178.44,372.31 179.67,370.32 181.06,368.44 182.6,366.68 184.28,365.05 186.08,363.57 188.0,362.23 189.07,363.91 190.21,363.23 191.39,362.59 192.59,362.02 193.82,361.51 195.08,361.06 196.35,360.67"/></clipPath>
<path clip-path="url(#cp19)" d="M174.29000000000002,357.71L116.70999999999998,415.29M182.29000000000002,357.71L124.70999999999998,415.29M190.29000000000002,357.71L132.70999999999998,415.29M198.29000000000002,357.71L140.70999999999998,415.29M206.29000000000002,357.71L148.70999999999998,415.29M214.29000000000002,357.71L156.70999999999998,415.29M222.29000000000002,357.71L164.70999999999998,415.29M230.29000000000002,357.71L172.70999999999998,415.29M238.29000000000002,357.71L180.70999999999998,415.29M246.29000000000002,357.71L188.70999999999998,415.29M254.29000000000002,357.71L196.70999999999998,415.29M262.29,357.71L204.70999999999998,415.29M270.29,357.71L212.70999999999998,415.29M278.29,357.71L220.70999999999998,415.29M286.29,357.71L228.70999999999998,415.29" stroke="#ffff00" stroke-width="1" fill="none"/>
<polygon points="195.82,358.74 198.09,358.21 200.4,357.87 202.74,357.71 205.07,357.74 207.4,357.97 209.7,358.38 209.27,360.33 210.56,360.65 211.84,361.03 213.1,361.48 214.33,361.98 215.53,362.55 216.71,363.18 217.69,361.44 219.68,362.67 221.56,364.06 223.32,365.6 224.95,367.28 226.43,369.08 227.77,371.0 226.09,372.07 226.77,373.21 227.41,374.39 227.98,375.59 228.49,376.82 228.94,378.08 229.33,379.35 231.26,378.82 231.79,381.09 232.13,383.4 232.29,385.74 232.26,388.07 232.03,390.4 231.62,392.7 229.67,392.27 229.35,393.56 228.97,394.84 228.52,396.1 228.02,397.33 227.45,398.53 226.82,399.71 228.56,400.69 227.33,402.68 225.94,404.56 224.4,406.32 222.72,407.95 220.92,409.43 219.0,410.77 217.93,409.09 216.79,409.77 215.61,410.41 214.41,410.98 213.18,411.49 211.92,411.94 210.65,412.33 211.18,414.26 208.91,414.79 206.6,415.13 204.26,415.29 201.93,415.26 199.6,415.03 197.3,414.62 197.73,412.67 196.44,412.35 195.16,411.97 193.9,411.52 192.67,411.02 191.47,410.45 190.29,409.82 189.31,411.56 187.32,410.33 185.44,408.94 183.68,407.4 182.05,405.72 180.57,403.92 179.23,402.0 180.91,400.93 180.23,399.79 179.59,398.61 179.02,397.41 178.51,396.18 178.06,394.92 177.67,393.65 175.74,394.18 175.21,391.91 174.87,389.6 174.71,387.26 174.74,384.93 174.97,382.6 175.38,380.3 177.33,380.73 177.65,379.44 178.03,378.16 178.48,376.9 178.98,375.67 179.55,374.47 180.18,373.29 178.44,372.31 179.67,370.32 181.06,368.44 182.6,366.68 184.28,365.05 186.08,363.57 188.0,362.23 189.07,363.91 190.21,363.23 191.39,362.59 192.59,362.02 193.82,361.51 195.08,361.06 196.35,360.67" stroke="#0000ff" stroke-width="1" fill="none"/>
<path d="M157.5,386.5H248.5" stroke="#ff0000" stroke-dasharray="12,3,3,3" stroke-dashoffset="2"/>
<line x1="203.5" y1="347.5" x2="203.5" y2="419.5" stroke="#ff0000" stroke-width="1"/>
<rect x="145.5" y="340.5" width="13.0" height="13.0" stroke="#00ffff" stroke-width="1" fill="none"/>
<rect x="158.5" y="340.5" width="20.0" height="13.0" stroke="#00ffff" stroke-width="1" fill="none"/>
<rect x="178.5" y="340.5" width="10.0" height="13.0" stroke="#00ffff" stroke-width="1" fill="none"/>
<line x1="149.5" y1="344.0" x2="153.5" y2="344.0" stroke="#00ffff" stroke-width="1"/>
<line x1="147.5" y1="347.0" x2="155.5" y2="347.0" stroke="#00ffff" stroke-width="1"/>
<line x1="149.5" y1="350.0" x2="153.5" y2="350.0" stroke="#00ffff" stroke-width="1"/>
<text transform="translate(168.5 350.5) rotate(0) scale(0.85 1)" fill="#00ffff" font-size="9" text-anchor="middle" style="font-style:italic;font-weight:normal" stroke="#00ffff" stroke-width="0.4">0.02</text>
<text transform="translate(183.5 350.5) rotate(0) scale(0.85 1)" fill="#00ffff" font-size="9" text-anchor="middle" style="font-style:italic;font-weight:normal" stroke="#00ffff" stroke-width="0.4">C</text>
<line x1="188.5" y1="347.5" x2="198.5" y2="347.5" stroke="#00ffff" stroke-width="1"/>
<line x1="198.5" y1="344" x2="198.5" y2="358.5" stroke="#00ffff" stroke-width="1"/>
<line x1="208.5" y1="344" x2="208.5" y2="358.5" stroke="#00ffff" stroke-width="1"/>
<line x1="198.5" y1="347.5" x2="212" y2="347.5" stroke="#00ffff" stroke-width="1"/>
<text x="198" y="342" fill="#00ffff" font-size="8" text-anchor="start" style="font-style:italic;font-weight:bold;"  stroke="#00ffff" stroke-width="0.4">8H8</text>
<line x1="162" y1="358.5" x2="203.5" y2="358.5" stroke="#00ffff" stroke-width="1"/>
<line x1="162" y1="413.5" x2="200" y2="413.5" stroke="#00ffff" stroke-width="1"/>
<line x1="164.5" y1="358.5" x2="164.5" y2="413.5" stroke="#00ffff" stroke-width="1"/>
<text x="160" y="386" fill="#00ffff" font-size="8" text-anchor="middle" style="font-style:italic;font-weight:bold;" transform="rotate(-90 160 386)"  stroke="#00ffff" stroke-width="0.4">Φ46H8</text>
<polyline points="203.5,386.5 222,360.5 235.5,360.5" stroke="#00ffff" stroke-width="1" fill="none"/>
<text x="224" y="358" fill="#00ffff" font-size="8" text-anchor="start" style="font-style:italic;font-weight:bold;"  stroke="#00ffff" stroke-width="0.4">R21</text>
<text x="195" y="433.5" fill="#0000ff" font-size="7.5" font-weight="bold" stroke="#0000ff" stroke-width="0.4">A-A</text>
<circle cx="373.5" cy="386.5" r="28.6" fill="none" stroke="#0000ff" stroke-width="1"/>
<clipPath id="cp20"><polygon points="402.1,386.5 401.75,390.97 400.7,395.34 398.98,399.48 396.64,403.31 393.72,406.72 390.31,409.64 386.48,411.98 382.34,413.7 377.97,414.75 373.5,415.1 369.03,414.75 364.66,413.7 360.52,411.98 356.69,409.64 353.28,406.72 350.36,403.31 348.02,399.48 346.3,395.34 345.25,390.97 344.9,386.5 345.25,382.03 346.3,377.66 348.02,373.52 350.36,369.69 353.28,366.28 356.69,363.36 360.52,361.02 364.66,359.3 369.03,358.25 373.5,357.9 377.97,358.25 382.34,359.3 386.48,361.02 390.31,363.36 393.72,366.28 396.64,369.69 398.98,373.52 400.7,377.66 401.75,382.03"/></clipPath>
<path clip-path="url(#cp20)" d="M344.1,357.9L286.9,415.1M352.1,357.9L294.9,415.1M360.1,357.9L302.9,415.1M368.1,357.9L310.9,415.1M376.1,357.9L318.9,415.1M384.1,357.9L326.9,415.1M392.1,357.9L334.9,415.1M400.1,357.9L342.9,415.1M408.1,357.9L350.9,415.1M416.1,357.9L358.9,415.1M424.1,357.9L366.9,415.1M432.1,357.9L374.9,415.1M440.1,357.9L382.9,415.1M448.1,357.9L390.9,415.1M456.1,357.9L398.9,415.1" stroke="#ffff00" stroke-width="1" fill="none"/>
<polygon points="377.99,364.35 379.29,364.65 380.56,365.03 381.81,365.48 383.04,366.01 384.23,366.61 385.38,367.27 384.12,369.32 385.33,370.12 386.47,371.02 387.55,371.99 388.56,373.04 389.49,374.16 390.34,375.34 392.34,374.01 393.04,375.14 393.67,376.31 394.24,377.52 394.73,378.76 395.15,380.02 395.49,381.3 393.16,381.86 393.44,383.28 393.62,384.73 393.7,386.18 393.67,387.63 393.53,389.08 393.3,390.51 395.65,390.99 395.35,392.29 394.97,393.56 394.52,394.81 393.99,396.04 393.39,397.23 392.73,398.38 390.68,397.12 389.88,398.33 388.98,399.47 388.01,400.55 386.96,401.56 385.84,402.49 384.66,403.34 385.99,405.34 384.86,406.04 383.69,406.67 382.48,407.24 381.24,407.73 379.98,408.15 378.7,408.49 378.14,406.16 376.72,406.44 375.27,406.62 373.82,406.7 372.37,406.67 370.92,406.53 369.49,406.3 369.01,408.65 367.71,408.35 366.44,407.97 365.19,407.52 363.96,406.99 362.77,406.39 361.62,405.73 362.88,403.68 361.67,402.88 360.53,401.98 359.45,401.01 358.44,399.96 357.51,398.84 356.66,397.66 354.66,398.99 353.96,397.86 353.33,396.69 352.76,395.48 352.27,394.24 351.85,392.98 351.51,391.7 353.84,391.14 353.56,389.72 353.38,388.27 353.3,386.82 353.33,385.37 353.47,383.92 353.7,382.49 351.35,382.01 351.65,380.71 352.03,379.44 352.48,378.19 353.01,376.96 353.61,375.77 354.27,374.62 356.32,375.88 357.12,374.67 358.02,373.53 358.99,372.45 360.04,371.44 361.16,370.51 362.34,369.66 361.01,367.66 362.14,366.96 363.31,366.33 364.52,365.76 365.76,365.27 367.02,364.85 368.3,364.51 368.86,366.84 370.28,366.56 371.73,366.38 373.18,366.3 374.63,366.33 376.08,366.47 377.51,366.7" stroke="#0000ff" stroke-width="1" fill="none"/>
<circle cx="373.5" cy="386.5" r="28.6" fill="none" stroke="#0000ff" stroke-width="1"/>
<path d="M333.5,386.5H413.5" stroke="#ff0000" stroke-dasharray="12,3,3,3" stroke-dashoffset="2"/>
<line x1="373.5" y1="352" x2="373.5" y2="414" stroke="#ff0000" stroke-width="1"/>
<rect x="385.5" y="340.5" width="13.0" height="12.0" stroke="#00ffff" stroke-width="1" fill="none"/>
<rect x="398.5" y="340.5" width="21.0" height="12.0" stroke="#00ffff" stroke-width="1" fill="none"/>
<rect x="419.5" y="340.5" width="11.0" height="12.0" stroke="#00ffff" stroke-width="1" fill="none"/>
<line x1="389.5" y1="343.5" x2="393.5" y2="343.5" stroke="#00ffff" stroke-width="1"/>
<line x1="387.5" y1="346.5" x2="395.5" y2="346.5" stroke="#00ffff" stroke-width="1"/>
<line x1="389.5" y1="349.5" x2="393.5" y2="349.5" stroke="#00ffff" stroke-width="1"/>
<text transform="translate(409.0 349.5) rotate(0) scale(0.85 1)" fill="#00ffff" font-size="9" text-anchor="middle" style="font-style:italic;font-weight:normal" stroke="#00ffff" stroke-width="0.4">0.02</text>
<text transform="translate(425.0 349.5) rotate(0) scale(0.85 1)" fill="#00ffff" font-size="9" text-anchor="middle" style="font-style:italic;font-weight:normal" stroke="#00ffff" stroke-width="0.4">C</text>
<line x1="358" y1="346.5" x2="385" y2="346.5" stroke="#00ffff" stroke-width="1"/>
<line x1="370.5" y1="344.5" x2="370.5" y2="364" stroke="#00ffff" stroke-width="1"/>
<line x1="377.5" y1="344.5" x2="377.5" y2="364" stroke="#00ffff" stroke-width="1"/>
<text x="353" y="343" fill="#00ffff" font-size="8" text-anchor="start" style="font-style:italic;font-weight:bold;"  stroke="#00ffff" stroke-width="0.4">6H8</text>
<line x1="339" y1="364.5" x2="373.5" y2="364.5" stroke="#00ffff" stroke-width="1"/>
<line x1="339" y1="408.5" x2="373.5" y2="408.5" stroke="#00ffff" stroke-width="1"/>
<line x1="341.5" y1="364.5" x2="341.5" y2="408.5" stroke="#00ffff" stroke-width="1"/>
<text x="336" y="386" fill="#00ffff" font-size="8" text-anchor="middle" style="font-style:italic;font-weight:bold;" transform="rotate(-90 336 386)"  stroke="#00ffff" stroke-width="0.4">Φ55H8</text>
<polyline points="373.5,386.5 389,363.5 403,363.5" stroke="#00ffff" stroke-width="1" fill="none"/>
<text x="390" y="362" fill="#00ffff" font-size="8" text-anchor="start" style="font-style:italic;font-weight:bold;"  stroke="#00ffff" stroke-width="0.4">R16</text>
<text x="363.5" y="425.5" fill="#0000ff" font-size="7.5" font-weight="bold" stroke="#0000ff" stroke-width="0.4">B-B</text>
<path d="M450,347.0H453M450,344.0H453M450,346.0H453M448,348.0H453M448.5,344.5V349.5M448.5,343.5V350.5M456,350.0H459M456,345.0H457M454,348.0H457M455,348.0H459M455.5,343.5V348.5M455.5,344.5V349.5M462,344.0H464M462,348.0H465M462,344.0H463M461.5,344.5V350.5M464.5,345.5V350.5M464.5,343.5V348.5M461.5,344.5V348.5M468,347.0H470M467,346.0H471M466,350.0H469M466,350.0H471M470.5,344.5V348.5M469.5,344.5V348.5M469.5,344.5V348.5" stroke="#00ffff" stroke-width="1" fill="none"/>
<text x="473" y="350" fill="#00ffff" font-size="7" text-anchor="start" style=""  stroke="#00ffff" stroke-width="0.4">:</text>
<text x="447" y="363.5" fill="#00ffff" font-size="7" text-anchor="start" style=""  stroke="#00ffff" stroke-width="0.4">1.</text>
<path d="M456,361.0H461M456,363.0H461M456,360.0H461M460.5,356.5V361.5M459.5,357.5V362.5M465,360.0H468M463,357.0H468M465,360.0H467M463,357.0H467M468.5,357.5V361.5M467.5,358.5V362.5M465.5,358.5V362.5M468.5,357.5V363.5M473,358.0H477M471,360.0H477M472,363.0H477M471,362.0H476M474.5,357.5V363.5M472.5,357.5V362.5M475.5,357.5V363.5M481,359.0H484M481,359.0H484M479,358.0H485M479,358.0H485M484.5,356.5V363.5M482.5,358.5V363.5M481.5,357.5V363.5M480.5,357.5V361.5M488,361.0H493M489,362.0H491M489,362.0H491M488,357.0H491M491.5,357.5V362.5M490.5,357.5V363.5M490.5,358.5V362.5M487.5,356.5V363.5M495,358.0H500M495,361.0H501M497,357.0H501M499.5,356.5V362.5M499.5,356.5V363.5M496.5,358.5V362.5" stroke="#00ffff" stroke-width="1" fill="none"/>
<text x="447" y="374" fill="#00ffff" font-size="7.5" text-anchor="start" style=""  stroke="#00ffff" stroke-width="0.4">220-250HB;</text>
<text x="449" y="385" fill="#00ffff" font-size="7" text-anchor="start" style=""  stroke="#00ffff" stroke-width="0.4">2.</text>
<path d="M457,380.5H460M457,380.5H462M457,378.5H461M459.5,379V384M456.5,378V385M461.5,379V383M458.5,379V383M464,378.5H468M464,380.5H468M464,382.5H468M466.5,380V385M469.5,379V383M466.5,378V384M465.5,380V383M474,379.5H478M472,384.5H477M472,383.5H478M473,382.5H477M477.5,378V385M474.5,379V384M473.5,380V383M474.5,379V383M480,378.5H486M481,379.5H486M480,380.5H485M482,382.5H486M483.5,380V384M485.5,378V383M480.5,379V383M489,379.5H492M488,380.5H492M489,381.5H493M493.5,378V383M489.5,378V385M488.5,378V383M498,379.5H500M498,381.5H501M498,379.5H500M496,379.5H502M501.5,380V385M500.5,380V385M499.5,378V385M496.5,379V385M506,379.5H509M506,380.5H509M504,384.5H510M505,383.5H509M509.5,380V383M507.5,380V385M508.5,378V383M508.5,378V384" stroke="#00ffff" stroke-width="1" fill="none"/>
<text x="514" y="385" fill="#00ffff" font-size="7" text-anchor="start" style=""  stroke="#00ffff" stroke-width="0.4">1.6mm;</text>
<text x="449" y="395.5" fill="#00ffff" font-size="7" text-anchor="start" style=""  stroke="#00ffff" stroke-width="0.4">3.</text>
<path d="M456,389.0H462M457,390.0H460M456,394.0H460M456.5,389.5V393.5M460.5,390.5V393.5M459.5,388.5V393.5M456.5,388.5V395.5M464,395.0H468M466,392.0H470M464,395.0H469M466,391.0H468M468.5,390.5V395.5M469.5,389.5V394.5M474,390.0H476M474,391.0H478M473,395.0H478M472,392.0H477M475.5,389.5V395.5M477.5,388.5V394.5M472.5,388.5V393.5M474.5,388.5V395.5M480,391.0H485M482,390.0H486M481,392.0H486M480,394.0H486M485.5,389.5V393.5M483.5,389.5V394.5M488,391.0H492M488,391.0H493M489,393.0H493M493.5,388.5V394.5M490.5,390.5V393.5M490.5,390.5V395.5M496,389.0H501M496,391.0H502M496,391.0H501M501.5,389.5V394.5M497.5,390.5V393.5" stroke="#00ffff" stroke-width="1" fill="none"/>
<text x="504" y="395.5" fill="#00ffff" font-size="7" text-anchor="start" style=""  stroke="#00ffff" stroke-width="0.4">1x45°</text>
<text x="447" y="408" fill="#00ffff" font-size="7" text-anchor="start" style=""  stroke="#00ffff" stroke-width="0.4">4.</text>
<path d="M454,403.5H459M456,401.5H460M454,404.5H459M456,401.5H460M456.5,401V406M455.5,401V407M454.5,402V408M456.5,403V407M462,402.5H466M462,406.5H468M463,402.5H468M462,402.5H467M467.5,402V406M463.5,402V407M466.5,403V408M464.5,402V408M470,401.5H474M472,405.5H476M471,405.5H476M470,404.5H474M475.5,402V406M473.5,403V407M478,402.5H483M480,402.5H482M478,406.5H483M478,403.5H484M478.5,401V406M483.5,402V407M479.5,401V408M483.5,402V406M488,402.5H491M487,401.5H492M487,402.5H491M487,401.5H491M488.5,403V407M487.5,401V407M487.5,402V408M486.5,402V407M496,403.5H498M494,402.5H498M494,407.5H500M496.5,401V408M497.5,403V408M497.5,401V407M502,402.5H506M502,405.5H506M504,406.5H507M503,407.5H506M505.5,401V407M507.5,403V406M503.5,401V406M506.5,403V407" stroke="#00ffff" stroke-width="1" fill="none"/>
<text x="510" y="408" fill="#00ffff" font-size="7" text-anchor="start" style=""  stroke="#00ffff" stroke-width="0.4">12.5.</text>
<line x1="567.5" y1="329.5" x2="792" y2="329.5" stroke="#ff00ff" stroke-width="1"/>
<line x1="567.5" y1="338.5" x2="792" y2="338.5" stroke="#ff00ff" stroke-width="1"/>
<line x1="567.5" y1="346.5" x2="792" y2="346.5" stroke="#ff00ff" stroke-width="1"/>
<line x1="567.5" y1="355.5" x2="792" y2="355.5" stroke="#ff00ff" stroke-width="1"/>
<line x1="567.5" y1="364.5" x2="792" y2="364.5" stroke="#ff00ff" stroke-width="1"/>
<line x1="567.5" y1="373.5" x2="792" y2="373.5" stroke="#ff00ff" stroke-width="1"/>
<line x1="567.5" y1="381.5" x2="792" y2="381.5" stroke="#ff00ff" stroke-width="1"/>
<line x1="567.5" y1="390.5" x2="792" y2="390.5" stroke="#ff00ff" stroke-width="1"/>
<line x1="567.5" y1="399.5" x2="792" y2="399.5" stroke="#ff00ff" stroke-width="1"/>
<line x1="567.5" y1="408.5" x2="792" y2="408.5" stroke="#ff00ff" stroke-width="1"/>
<line x1="567.5" y1="416.5" x2="792" y2="416.5" stroke="#ff00ff" stroke-width="1"/>
<line x1="567.5" y1="425.5" x2="792" y2="425.5" stroke="#ff00ff" stroke-width="1"/>
<line x1="567.5" y1="434.5" x2="792" y2="434.5" stroke="#ff00ff" stroke-width="1"/>
<line x1="567.5" y1="443.5" x2="792" y2="443.5" stroke="#ff00ff" stroke-width="1"/>
<line x1="567" y1="443.5" x2="792" y2="443.5" stroke="#ff00ff" stroke-width="1"/>
<line x1="567.5" y1="460.5" x2="792" y2="460.5" stroke="#ff00ff" stroke-width="1"/>
<line x1="567.5" y1="329.5" x2="567.5" y2="460.5" stroke="#ff00ff" stroke-width="1"/>
<line x1="577.5" y1="329.5" x2="577.5" y2="460.5" stroke="#ff00ff" stroke-width="1"/>
<line x1="627.5" y1="329.5" x2="627.5" y2="460.5" stroke="#ff00ff" stroke-width="1"/>
<line x1="682.5" y1="329.5" x2="682.5" y2="460.5" stroke="#ff00ff" stroke-width="1"/>
<line x1="692.5" y1="329.5" x2="692.5" y2="460.5" stroke="#ff00ff" stroke-width="1"/>
<line x1="739.5" y1="329.5" x2="739.5" y2="460.5" stroke="#ff00ff" stroke-width="1"/>
<line x1="767.5" y1="329.5" x2="767.5" y2="460.5" stroke="#ff00ff" stroke-width="1"/>
<line x1="566.5" y1="329.5" x2="566.5" y2="460.5" stroke="#ff00ff" stroke-width="1"/>
<line x1="739.5" y1="452.5" x2="767.5" y2="452.5" stroke="#ff00ff" stroke-width="1"/>
<text transform="translate(572.5 337) scale(0.7 1)" fill="#ff00ff" font-size="10" text-anchor="middle" stroke="#ff00ff" stroke-width="0.4">13</text>
<text transform="translate(572.5 346) scale(0.7 1)" fill="#ff00ff" font-size="10" text-anchor="middle" stroke="#ff00ff" stroke-width="0.4">12</text>
<text transform="translate(572.5 354) scale(0.7 1)" fill="#ff00ff" font-size="10" text-anchor="middle" stroke="#ff00ff" stroke-width="0.4">11</text>
<text transform="translate(572.5 363) scale(0.7 1)" fill="#ff00ff" font-size="10" text-anchor="middle" stroke="#ff00ff" stroke-width="0.4">10</text>
<text transform="translate(572.5 372) scale(0.7 1)" fill="#ff00ff" font-size="10" text-anchor="middle" stroke="#ff00ff" stroke-width="0.4">9</text>
<text transform="translate(572.5 381) scale(0.7 1)" fill="#ff00ff" font-size="10" text-anchor="middle" stroke="#ff00ff" stroke-width="0.4">8</text>
<text transform="translate(572.5 389) scale(0.7 1)" fill="#ff00ff" font-size="10" text-anchor="middle" stroke="#ff00ff" stroke-width="0.4">7</text>
<text transform="translate(572.5 398) scale(0.7 1)" fill="#ff00ff" font-size="10" text-anchor="middle" stroke="#ff00ff" stroke-width="0.4">6</text>
<text transform="translate(572.5 407) scale(0.7 1)" fill="#ff00ff" font-size="10" text-anchor="middle" stroke="#ff00ff" stroke-width="0.4">5</text>
<text transform="translate(572.5 416) scale(0.7 1)" fill="#ff00ff" font-size="10" text-anchor="middle" stroke="#ff00ff" stroke-width="0.4">4</text>
<text transform="translate(572.5 424) scale(0.7 1)" fill="#ff00ff" font-size="10" text-anchor="middle" stroke="#ff00ff" stroke-width="0.4">3</text>
<text transform="translate(572.5 433) scale(0.7 1)" fill="#ff00ff" font-size="10" text-anchor="middle" stroke="#ff00ff" stroke-width="0.4">2</text>
<text transform="translate(572.5 442) scale(0.7 1)" fill="#ff00ff" font-size="10" text-anchor="middle" stroke="#ff00ff" stroke-width="0.4">1</text>
<text x="580" y="335.5" fill="#ff00ff" font-size="6" letter-spacing="0.4" stroke="#ff00ff" stroke-width="0.4">GB/T 6-85</text>
<text x="580" y="344.5" fill="#ff00ff" font-size="6" letter-spacing="0.4" stroke="#ff00ff" stroke-width="0.4">GB297-T20R</text>
<text x="580" y="387.5" fill="#ff00ff" font-size="6" letter-spacing="0.4" stroke="#ff00ff" stroke-width="0.4">GB276-106</text>
<text x="580" y="405.5" fill="#ff00ff" font-size="6" letter-spacing="0.4" stroke="#ff00ff" stroke-width="0.4">GB/T9-85</text>
<text x="580" y="431.5" fill="#ff00ff" font-size="6" letter-spacing="0.4" stroke="#ff00ff" stroke-width="0.4">GB297-T20R</text>
<path d="M632,335.0H635M632,336.0H633M632,336.0H633M631.5,330.5V336.5M630.5,330.5V334.5M632.5,330.5V335.5M633.5,332.5V336.5M638,335.0H641M637,334.0H641M636,334.0H639M640.5,332.5V336.5M640.5,330.5V334.5M639.5,331.5V336.5M638.5,330.5V334.5M644,336.0H646M643,334.0H647M644,334.0H646M642.5,332.5V334.5M643.5,330.5V334.5M650,333.0H651M649,336.0H651M648,335.0H653M651.5,330.5V335.5M650.5,332.5V336.5M649.5,332.5V335.5M655,335.0H658M655,334.0H659M654,335.0H658M655,331.0H659M656.5,331.5V336.5M658.5,331.5V335.5M657.5,330.5V336.5M654.5,332.5V336.5M661,335.0H664M662,332.0H663M661,335.0H665M662.5,330.5V335.5M663.5,331.5V336.5M661.5,330.5V335.5M663.5,331.5V335.5M667,333.0H670M667,331.0H671M667,333.0H670M666.5,330.5V334.5M666.5,332.5V335.5M668.5,331.5V336.5M672,335.0H676M673,334.0H677M672,333.0H677M673,336.0H675M673.5,330.5V335.5M675.5,332.5V335.5M673.5,331.5V335.5M680,334.0H681M680,332.0H683M680,331.0H682M681.5,332.5V336.5M680.5,331.5V336.5M682.5,330.5V336.5M681.5,331.5V335.5" stroke="#ff00ff" stroke-width="1" fill="none"/>
<path d="M642,342.0H643M641,345.0H644M640,345.0H644M642,343.0H643M643.5,339.5V345.5M641.5,339.5V345.5M644.5,340.5V343.5M647,342.0H650M648,341.0H651M646,341.0H651M648.5,341.5V345.5M648.5,339.5V344.5M648.5,341.5V345.5M653,343.0H656M654,345.0H657M653,343.0H656M652.5,340.5V344.5M656.5,340.5V345.5M656.5,341.5V343.5M653.5,339.5V344.5M660,343.0H662M659,343.0H663M658,341.0H662M661.5,341.5V344.5M658.5,339.5V344.5M662.5,340.5V344.5M664,341.0H669M666,344.0H669M666,345.0H667M667.5,339.5V343.5M664.5,339.5V345.5M672,340.0H673M670,342.0H673M672,342.0H673M673.5,341.5V345.5M670.5,339.5V344.5M674.5,341.5V345.5M673.5,340.5V345.5M677,344.0H680M677,342.0H679M677,341.0H679M677.5,341.5V345.5M676.5,340.5V343.5" stroke="#ff00ff" stroke-width="1" fill="none"/>
<path d="M648,348.0H652M650,353.0H652M649,348.0H653M649,353.0H652M649.5,348.5V353.5M650.5,349.5V352.5M654,351.0H659M656,350.0H657M654,348.0H658M655,349.0H659M655.5,348.5V353.5M656.5,348.5V353.5M658.5,348.5V351.5M655.5,347.5V352.5M662,348.0H665M660,351.0H665M662,348.0H665M660,351.0H663M660.5,347.5V352.5M663.5,349.5V352.5M660.5,347.5V353.5M662.5,347.5V353.5" stroke="#ff00ff" stroke-width="1" fill="none"/>
<path d="M650,359.0H651M649,360.0H652M648,360.0H653M648,357.0H652M648.5,357.5V361.5M648.5,358.5V362.5M655,359.0H659M656,357.0H658M655,358.0H657M654,360.0H658M656.5,358.5V361.5M654.5,358.5V361.5M655.5,358.5V361.5M661,357.0H665M661,357.0H665M660,362.0H663M662.5,357.5V361.5M662.5,358.5V362.5M662.5,358.5V360.5" stroke="#ff00ff" stroke-width="1" fill="none"/>
<path d="M648,368.0H651M650,370.0H653M648,366.0H653M650,369.0H652M651.5,366.5V370.5M651.5,365.5V370.5M649.5,365.5V369.5M656,367.0H659M655,368.0H658M656,368.0H659M654,370.0H658M655.5,365.5V370.5M654.5,367.5V371.5M657.5,367.5V369.5M656.5,365.5V370.5M662,368.0H665M660,367.0H664M662,369.0H664M661.5,365.5V371.5M663.5,366.5V369.5" stroke="#ff00ff" stroke-width="1" fill="none"/>
<path d="M650,379.0H653M649,377.0H652M649,379.0H652M650.5,376.5V379.5M649.5,375.5V380.5M649.5,374.5V380.5M649.5,375.5V378.5M655,375.0H658M656,376.0H657M656,376.0H659M657.5,374.5V380.5M654.5,375.5V380.5M657.5,375.5V380.5M660,375.0H665M662,379.0H665M661,375.0H663M661,376.0H663M662.5,376.5V380.5M660.5,376.5V378.5" stroke="#ff00ff" stroke-width="1" fill="none"/>
<path d="M644,383.0H647M643,384.0H648M643,385.0H646M645,388.0H648M643.5,383.5V387.5M645.5,382.5V386.5M649,384.0H653M650,387.0H654M649,386.0H653M651,388.0H654M653.5,382.5V386.5M650.5,383.5V386.5M657,385.0H659M655,386.0H659M657,388.0H659M656,386.0H660M657.5,384.5V388.5M658.5,384.5V387.5M656.5,382.5V387.5M661,383.0H665M662,387.0H665M661,384.0H666M661.5,384.5V388.5M664.5,382.5V386.5M665.5,383.5V386.5M668,385.0H672M667,387.0H672M668,383.0H671M668.5,383.5V388.5M667.5,383.5V387.5M674,388.0H678M675,388.0H676M675,384.0H678M677.5,383.5V386.5M674.5,383.5V388.5M677.5,382.5V388.5M676.5,384.5V388.5" stroke="#ff00ff" stroke-width="1" fill="none"/>
<path d="M648,392.0H653M648,397.0H653M650,396.0H653M649,397.0H653M651.5,393.5V396.5M652.5,393.5V396.5M651.5,392.5V395.5M656,395.0H658M656,395.0H658M654,393.0H659M658.5,392.5V396.5M655.5,392.5V395.5M657.5,391.5V396.5M660,392.0H664M661,395.0H665M662,395.0H663M660,397.0H665M661.5,391.5V395.5M662.5,393.5V395.5" stroke="#ff00ff" stroke-width="1" fill="none"/>
<path d="M644,405.0H646M643,402.0H648M645,405.0H646M643.5,400.5V406.5M646.5,401.5V406.5M651,403.0H653M650,402.0H652M650,403.0H654M651.5,402.5V405.5M650.5,402.5V405.5M655,403.0H660M656,402.0H660M656,406.0H658M657.5,401.5V406.5M657.5,400.5V404.5M655.5,402.5V405.5M663,405.0H664M662,401.0H664M662,406.0H664M662,403.0H665M663.5,402.5V406.5M663.5,401.5V406.5M664.5,400.5V406.5M665.5,402.5V406.5M668,403.0H670M669,405.0H671M667,406.0H670M667,401.0H672M669.5,402.5V404.5M670.5,401.5V404.5M669.5,400.5V406.5M670.5,400.5V404.5M673,401.0H676M674,403.0H678M674,405.0H676M674.5,401.5V404.5M675.5,402.5V406.5" stroke="#ff00ff" stroke-width="1" fill="none"/>
<path d="M635,414.0H639M634,411.0H639M634,415.0H638M634.5,409.5V413.5M635.5,411.5V414.5M637.5,410.5V415.5M641,414.0H643M642,415.0H644M642,414.0H643M643.5,409.5V415.5M640.5,409.5V415.5M644.5,409.5V414.5M641.5,409.5V415.5M648,410.0H649M646,415.0H651M646,413.0H649M650.5,411.5V413.5M649.5,411.5V415.5M654,412.0H657M653,415.0H655M652,414.0H656M654,413.0H656M652.5,411.5V413.5M655.5,409.5V415.5M660,411.0H663M659,410.0H661M659,415.0H661M658.5,410.5V413.5M662.5,411.5V414.5M662.5,410.5V414.5M664,414.0H669M664,412.0H667M664,411.0H667M666.5,409.5V414.5M666.5,411.5V415.5M672,415.0H673M671,413.0H673M670,415.0H675M672,413.0H675M674.5,410.5V415.5M673.5,411.5V413.5M670.5,411.5V415.5M671.5,409.5V415.5M676,414.0H680M678,411.0H681M676,410.0H681M676.5,411.5V415.5M676.5,409.5V413.5" stroke="#ff00ff" stroke-width="1" fill="none"/>
<path d="M654,422.0H657M653,423.0H657M652,419.0H657M652,418.0H657M652.5,419.5V421.5M654.5,418.5V423.5M658,423.0H662M659,420.0H662M658,420.0H662M660.5,418.5V423.5M660.5,418.5V421.5" stroke="#ff00ff" stroke-width="1" fill="none"/>
<path d="M642,431.0H645M640,430.0H644M640,431.0H644M642,430.0H645M644.5,428.5V432.5M640.5,428.5V431.5M641.5,427.5V432.5M646,427.0H650M646,430.0H650M646,432.0H650M650.5,427.5V430.5M648.5,428.5V432.5M648.5,426.5V430.5M652,428.0H655M653,427.0H655M652,431.0H655M654.5,427.5V432.5M655.5,427.5V430.5M652.5,427.5V430.5M659,428.0H662M660,430.0H661M659,428.0H661M659.5,427.5V432.5M662.5,428.5V430.5M662.5,428.5V432.5M666,429.0H669M666,430.0H667M665,432.0H669M665,430.0H667M666.5,428.5V432.5M665.5,427.5V431.5M665.5,428.5V432.5M666.5,427.5V430.5M670,428.0H673M672,429.0H673M670,429.0H675M672.5,426.5V431.5M670.5,426.5V430.5M670.5,426.5V431.5M671.5,426.5V431.5M676,429.0H681M676,432.0H680M677,428.0H680M676,427.0H680M679.5,428.5V432.5M680.5,428.5V431.5M679.5,426.5V432.5" stroke="#ff00ff" stroke-width="1" fill="none"/>
<path d="M649,441.0H653M648,441.0H652M650,441.0H651M650,441.0H652M649.5,437.5V439.5M652.5,435.5V439.5M649.5,437.5V441.5M651.5,436.5V440.5M654,441.0H658M655,437.0H657M656,441.0H659M655,438.0H658M657.5,435.5V439.5M657.5,437.5V439.5M655.5,437.5V440.5M654.5,436.5V440.5M662,438.0H665M662,437.0H665M661,440.0H665M664.5,436.5V439.5M661.5,437.5V440.5" stroke="#ff00ff" stroke-width="1" fill="none"/>
<text transform="translate(687.5 337) scale(0.7 1)" fill="#ff00ff" font-size="9" text-anchor="middle" stroke="#ff00ff" stroke-width="0.4">4</text>
<text transform="translate(687.5 346) scale(0.7 1)" fill="#ff00ff" font-size="9" text-anchor="middle" stroke="#ff00ff" stroke-width="0.4">1</text>
<text transform="translate(687.5 354) scale(0.7 1)" fill="#ff00ff" font-size="9" text-anchor="middle" stroke="#ff00ff" stroke-width="0.4">1</text>
<text transform="translate(687.5 363) scale(0.7 1)" fill="#ff00ff" font-size="9" text-anchor="middle" stroke="#ff00ff" stroke-width="0.4">1</text>
<text transform="translate(687.5 372) scale(0.7 1)" fill="#ff00ff" font-size="9" text-anchor="middle" stroke="#ff00ff" stroke-width="0.4">1</text>
<text transform="translate(687.5 381) scale(0.7 1)" fill="#ff00ff" font-size="9" text-anchor="middle" stroke="#ff00ff" stroke-width="0.4">1</text>
<text transform="translate(687.5 389) scale(0.7 1)" fill="#ff00ff" font-size="9" text-anchor="middle" stroke="#ff00ff" stroke-width="0.4">1</text>
<text transform="translate(687.5 398) scale(0.7 1)" fill="#ff00ff" font-size="9" text-anchor="middle" stroke="#ff00ff" stroke-width="0.4">1</text>
<text transform="translate(687.5 407) scale(0.7 1)" fill="#ff00ff" font-size="9" text-anchor="middle" stroke="#ff00ff" stroke-width="0.4">1</text>
<text transform="translate(687.5 416) scale(0.7 1)" fill="#ff00ff" font-size="9" text-anchor="middle" stroke="#ff00ff" stroke-width="0.4">1</text>
<text transform="translate(687.5 424) scale(0.7 1)" fill="#ff00ff" font-size="9" text-anchor="middle" stroke="#ff00ff" stroke-width="0.4">1</text>
<text transform="translate(687.5 433) scale(0.7 1)" fill="#ff00ff" font-size="9" text-anchor="middle" stroke="#ff00ff" stroke-width="0.4">1</text>
<text transform="translate(687.5 442) scale(0.7 1)" fill="#ff00ff" font-size="9" text-anchor="middle" stroke="#ff00ff" stroke-width="0.4">1</text>
<text x="707" y="336" fill="#ff00ff" font-size="6.5" stroke="#ff00ff" stroke-width="0.4">45</text>
<path d="M717,333.5H719M717,334.5H719M717,332.5H720M718.5,333V337M719.5,332V335M715.5,332V336M718.5,332V337" stroke="#ff00ff" stroke-width="1" fill="none"/>
<text x="707" y="353" fill="#ff00ff" font-size="6.5" stroke="#ff00ff" stroke-width="0.4">40Cr</text>
<text x="707" y="362" fill="#ff00ff" font-size="6.5" stroke="#ff00ff" stroke-width="0.4">40Cr</text>
<text x="707" y="371" fill="#ff00ff" font-size="6.5" stroke="#ff00ff" stroke-width="0.4">40Cr</text>
<text x="707" y="380" fill="#ff00ff" font-size="6.5" stroke="#ff00ff" stroke-width="0.4">45</text>
<path d="M716,378.5H718M717,380.5H719M716,379.5H720M716.5,376V379M718.5,377V381" stroke="#ff00ff" stroke-width="1" fill="none"/>
<text x="707" y="397" fill="#ff00ff" font-size="6.5" stroke="#ff00ff" stroke-width="0.4">40Cr</text>
<text x="707" y="415" fill="#ff00ff" font-size="6.5" stroke="#ff00ff" stroke-width="0.4">40Cr</text>
<text x="707" y="423" fill="#ff00ff" font-size="6.5" stroke="#ff00ff" stroke-width="0.4">45</text>
<path d="M715,419.5H720M717,418.5H720M717,421.5H718M715,423.5H720M717.5,420V422M718.5,419V423M719.5,420V424" stroke="#ff00ff" stroke-width="1" fill="none"/>
<text x="707" y="441" fill="#ff00ff" font-size="6.5" stroke="#ff00ff" stroke-width="0.4">45</text>
<path d="M716,437.5H718M717,439.5H719M717,439.5H720M715,439.5H718M717.5,437V442M717.5,437V441M718.5,437V440" stroke="#ff00ff" stroke-width="1" fill="none"/>
<path d="M569,450.5H574M570,458.5H575M571,446.5H574M570.5,447V458M574.5,447V459M574.5,445V459M569.5,447V458" stroke="#ff00ff" stroke-width="1" fill="none"/>
<path d="M592,449.5H596M590,451.5H595M590,453.5H596M592,454.5H596M594.5,450V454M590.5,450V454M595.5,449V456M593.5,450V456M610,455.5H614M609,449.5H613M608,451.5H613M611.5,450V456M611.5,449V456M613.5,449V456M611.5,448V454" stroke="#ff00ff" stroke-width="1" fill="none"/>
<path d="M639,453.5H642M640,455.5H643M639,455.5H643M641.5,450V456M639.5,450V455M676,448.5H678M674,453.5H678M675,455.5H680M674.5,448V454M677.5,450V456" stroke="#ff00ff" stroke-width="1" fill="none"/>
<path d="M685,458.5H689M684,450.5H688M683,453.5H689M684,451.5H689M685.5,447V459M689.5,446V458" stroke="#ff00ff" stroke-width="1" fill="none"/>
<path d="M707,454.5H710M708,452.5H711M708,451.5H711M707,449.5H712M708.5,450V455M707.5,450V454M706.5,448V455M725,448.5H729M724,449.5H730M725,451.5H728M726,448.5H728M728.5,449V454M725.5,450V454M729.5,450V454M729.5,448V456" stroke="#ff00ff" stroke-width="1" fill="none"/>
<path d="M743,450.5H746M742,446.5H746M742,446.5H747M742.5,447V451M744.5,445V450M746.5,447V450M744.5,445V450M755,445.5H758M756,450.5H760M756,448.5H758M754.5,445V450M758.5,447V450M757.5,445V451" stroke="#ff00ff" stroke-width="1" fill="none"/>
<path d="M746,458.5H750M745,457.5H748M744,454.5H748M744,457.5H750M749.5,454V458M744.5,454V457M749.5,454V459M745.5,454V459M758,456.5H760M757,455.5H760M756,455.5H761M758,455.5H762M758.5,456V457M761.5,455V458" stroke="#ff00ff" stroke-width="1" fill="none"/>
<path d="M770,448.5H776M772,448.5H774M771,449.5H775M772,452.5H774M771.5,449V454M770.5,449V455M780,450.5H786M782,453.5H786M781,454.5H785M781,455.5H784M782.5,449V455M780.5,450V454M785.5,450V455" stroke="#ff00ff" stroke-width="1" fill="none"/>
<line x1="567" y1="469.5" x2="667" y2="469.5" stroke="#ffffff" stroke-width="1"/>
<line x1="567" y1="478" x2="667" y2="478" stroke="#ffffff" stroke-width="1"/>
<line x1="567" y1="486.5" x2="667" y2="486.5" stroke="#ffffff" stroke-width="1"/>
<line x1="567" y1="495.5" x2="729.5" y2="495.5" stroke="#ffffff" stroke-width="1"/>
<line x1="567" y1="504.5" x2="667" y2="504.5" stroke="#ffffff" stroke-width="1"/>
<line x1="567" y1="513" x2="667" y2="513" stroke="#ffffff" stroke-width="1"/>
<line x1="567" y1="522" x2="667" y2="522" stroke="#ffffff" stroke-width="1"/>
<line x1="567" y1="460.5" x2="567" y2="495.5" stroke="#ffffff" stroke-width="1"/>
<line x1="579.5" y1="460.5" x2="579.5" y2="495.5" stroke="#ffffff" stroke-width="1"/>
<line x1="591.5" y1="460.5" x2="591.5" y2="495.5" stroke="#ffffff" stroke-width="1"/>
<line x1="611.5" y1="460.5" x2="611.5" y2="495.5" stroke="#ffffff" stroke-width="1"/>
<line x1="632" y1="460.5" x2="632" y2="495.5" stroke="#ffffff" stroke-width="1"/>
<line x1="646.5" y1="460.5" x2="646.5" y2="495.5" stroke="#ffffff" stroke-width="1"/>
<line x1="581.5" y1="495.5" x2="581.5" y2="531" stroke="#ffffff" stroke-width="1"/>
<line x1="598" y1="495.5" x2="598" y2="531" stroke="#ffffff" stroke-width="1"/>
<line x1="617" y1="495.5" x2="617" y2="531" stroke="#ffffff" stroke-width="1"/>
<line x1="632" y1="495.5" x2="632" y2="531" stroke="#ffffff" stroke-width="1"/>
<line x1="646.5" y1="495.5" x2="646.5" y2="531" stroke="#ffffff" stroke-width="1"/>
<line x1="566.5" y1="460.5" x2="566.5" y2="531" stroke="#ffffff" stroke-width="1"/>
<line x1="667.5" y1="460.5" x2="667.5" y2="531" stroke="#ffffff" stroke-width="1"/>
<line x1="729.5" y1="460.5" x2="729.5" y2="531" stroke="#ffffff" stroke-width="1"/>
<line x1="729.5" y1="483.5" x2="792" y2="483.5" stroke="#ffffff" stroke-width="1"/>
<line x1="667" y1="508.5" x2="792" y2="508.5" stroke="#ffffff" stroke-width="1"/>
<line x1="667" y1="520" x2="729.5" y2="520" stroke="#ffffff" stroke-width="1"/>
<line x1="675.5" y1="508.5" x2="675.5" y2="520" stroke="#ffffff" stroke-width="1"/>
<line x1="683.5" y1="508.5" x2="683.5" y2="520" stroke="#ffffff" stroke-width="1"/>
<line x1="691.5" y1="508.5" x2="691.5" y2="520" stroke="#ffffff" stroke-width="1"/>
<line x1="699.5" y1="508.5" x2="699.5" y2="520" stroke="#ffffff" stroke-width="1"/>
<line x1="714.5" y1="508.5" x2="714.5" y2="520" stroke="#ffffff" stroke-width="1"/>
<line x1="699.5" y1="495.5" x2="699.5" y2="508.5" stroke="#ffffff" stroke-width="1"/>
<line x1="714.5" y1="495.5" x2="714.5" y2="508.5" stroke="#ffffff" stroke-width="1"/>
<path d="M568,492.5H570M567,491.5H571M569,491.5H571M571.5,488V493M569.5,490V494M574,490.5H578M573,492.5H577M575,489.5H578M575,490.5H576M576.5,489V492M573.5,490V492M576.5,489V494" stroke="#ffffff" stroke-width="1" fill="none"/>
<path d="M581,492.5H584M582,491.5H584M582,489.5H584M581.5,489V493M585.5,488V492M583.5,488V494M588,492.5H590M588,490.5H590M587,492.5H592M587,489.5H592M588.5,490V493M589.5,490V492M589.5,489V492M588.5,488V494" stroke="#ffffff" stroke-width="1" fill="none"/>
<path d="M595,488.5H597M594,491.5H599M596,490.5H599M595,490.5H597M598.5,488V494M594.5,488V492M597.5,490V492M601,490.5H605M602,491.5H603M601,489.5H605M602.5,488V494M603.5,488V494M600.5,488V492" stroke="#ffffff" stroke-width="1" fill="none"/>
<path d="M614,491.5H617M615,492.5H616M615,488.5H617M614,490.5H615M614.5,490V494M616.5,488V493M614.5,489V494M614.5,488V494M620,488.5H622M619,488.5H620M620,493.5H620M618,491.5H622M619.5,489V494M619.5,490V492M620.5,490V492M624,488.5H626M624,490.5H626M624,488.5H626M623,491.5H626M624.5,488V492M623.5,489V492M624.5,488V494M624.5,488V492M629,489.5H632M628,491.5H630M629,488.5H631M628,490.5H631M628.5,490V493M629.5,489V494M628.5,488V492M631.5,490V494" stroke="#ffffff" stroke-width="1" fill="none"/>
<path d="M634,490.5H637M633,489.5H638M635,490.5H637M633,490.5H637M636.5,488V493M636.5,489V494M641,488.5H642M641,489.5H643M639,490.5H643M640.5,489V493M641.5,488V494M639.5,489V493M642.5,488V494" stroke="#ffffff" stroke-width="1" fill="none"/>
<path d="M648,493.5H652M649,492.5H651M649,489.5H653M649,492.5H653M650.5,489V494M651.5,488V493M656,489.5H659M654,493.5H659M654,492.5H659M658.5,490V493M656.5,488V494" stroke="#ffffff" stroke-width="1" fill="none"/>
<path d="M570,502.5H571M570,498.5H572M568,498.5H573M572.5,498V501M568.5,499V502M570.5,498V501M571.5,497V503M576,498.5H578M574,498.5H577M574,499.5H579M575,502.5H577M578.5,497V502M578.5,498V501M574.5,497V502" stroke="#ffffff" stroke-width="1" fill="none"/>
<path d="M616,502.5H617M616,497.5H619M616,502.5H618M615.5,499V501M616.5,497V503M615.5,497V501M621,497.5H623M620,501.5H624M622,497.5H622M621.5,498V503M623.5,499V503M625,499.5H627M625,498.5H628M626,497.5H628M627,501.5H628M625.5,497V503M628.5,497V501" stroke="#ffffff" stroke-width="1" fill="none"/>
<path d="M619,506.5H620M619,508.5H621M617,506.5H620M620.5,507V510M621.5,507V509M624,505.5H627M623,508.5H627M624,510.5H626M625.5,506V509M623.5,506V509M624.5,507V510" stroke="#ffffff" stroke-width="1" fill="none"/>
<path d="M570,519.5H573M568,516.5H571M568,515.5H572M571.5,514V518M568.5,514V520M571.5,515V519M576,514.5H577M576,516.5H577M576,516.5H577M574.5,516V520M576.5,514V518" stroke="#ffffff" stroke-width="1" fill="none"/>
<path d="M566,524.5H570M567,523.5H570M566,528.5H571M566.5,525V527M568.5,523V528M570.5,525V529M572,527.5H576M574,526.5H576M572,525.5H575M574,523.5H575M574.5,524V527M576.5,523V527" stroke="#ffffff" stroke-width="1" fill="none"/>
<path d="M620,527.5H622M620,526.5H622M619,527.5H622M618,525.5H623M620.5,523V529M622.5,525V528M624,525.5H629M626,525.5H628M625,526.5H628M625,524.5H629M624.5,523V527M624.5,525V528" stroke="#ffffff" stroke-width="1" fill="none"/>
<path d="M671,498.0H673M670,504.0H673M669,503.0H672M671,499.0H672M670.5,498.5V503.5M671.5,497.5V502.5M670.5,499.5V502.5M671.5,499.5V504.5M677,504.0H678M677,503.0H680M675,501.0H680M677,501.0H678M675.5,498.5V503.5M679.5,497.5V503.5M677.5,499.5V502.5M682,504.0H684M682,501.0H684M682,500.0H685M684.5,499.5V502.5M685.5,498.5V502.5M683.5,497.5V502.5M688,501.0H692M688,502.0H692M689,501.0H691M687,502.0H692M689.5,498.5V502.5M688.5,498.5V504.5M690.5,497.5V504.5" stroke="#ffffff" stroke-width="1" fill="none"/>
<path d="M699,502.0H702M699,502.0H701M699,502.0H701M702.5,499.5V502.5M701.5,498.5V503.5M700.5,497.5V502.5M706,498.0H709M704,502.0H709M705,501.0H707M706,501.0H707M708.5,497.5V504.5M707.5,498.5V503.5M707.5,499.5V502.5" stroke="#ffffff" stroke-width="1" fill="none"/>
<path d="M716,502.0H719M715,499.0H718M714,500.0H718M714,502.0H719M716.5,499.5V503.5M718.5,498.5V502.5M715.5,499.5V503.5M718.5,497.5V502.5M720,499.0H723M722,502.0H725M722,500.0H723M720.5,499.5V503.5M720.5,497.5V503.5M724.5,497.5V503.5" stroke="#ffffff" stroke-width="1" fill="none"/>
<path d="M670,525.5H673M670,521.5H675M672,524.5H673M672,523.5H673M674.5,521V525M671.5,522V525" stroke="#ffffff" stroke-width="1" fill="none"/>
<path d="M690,522.5H691M688,521.5H693M688,521.5H691M691.5,522V525M691.5,521V525" stroke="#ffffff" stroke-width="1" fill="none"/>
<path d="M702,525.5H706M701,526.5H705M701,523.5H706M703.5,523V527M705.5,521V526M702.5,522V525M704.5,521V527" stroke="#ffffff" stroke-width="1" fill="none"/>
<path d="M719,525.5H723M721,521.5H724M719,522.5H724M720.5,523V527M721.5,521V526M721.5,522V525" stroke="#ffffff" stroke-width="1" fill="none"/>
<text x="721" y="515" fill="#00ffff" font-size="7" text-anchor="middle" style=""  stroke="#00ffff" stroke-width="0.4">1:1</text>
<path d="M741,491.5H744M743,494.5H744M741,495.5H745M742,493.5H744M744.5,491V498M741.5,491V498M743.5,492V498M749,494.5H751M748,491.5H750M748,497.5H751M750.5,493V498M747.5,492V497M751.5,491V497M754,493.5H758M753,494.5H757M753,496.5H757M754.5,491V496M754.5,491V498M755.5,493V498" stroke="#ffffff" stroke-width="1" fill="none"/>
</svg></body></html>
